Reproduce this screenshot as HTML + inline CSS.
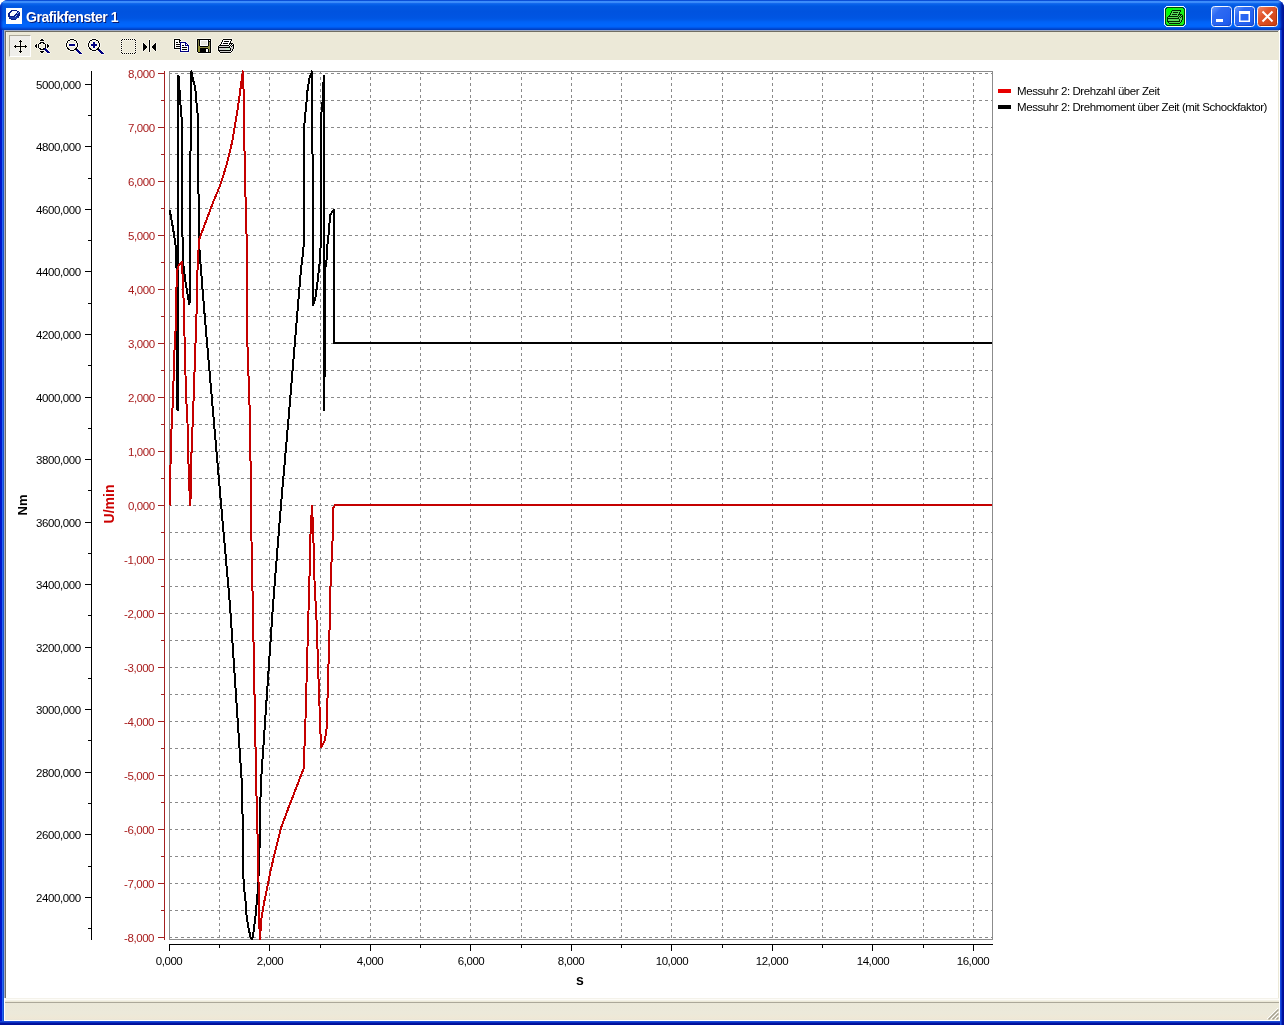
<!DOCTYPE html><html><head><meta charset="utf-8"><title>Grafikfenster 1</title><style>
html,body{margin:0;padding:0;background:#fff;width:1284px;height:1025px;overflow:hidden;}
.a{position:absolute;}
.t{position:absolute;font-family:'Liberation Sans', sans-serif;font-size:11.5px;line-height:12px;white-space:nowrap;letter-spacing:-0.42px;will-change:transform;}
</style></head><body>
<div class="a" style="left:0;top:0;width:1284px;height:1025px;border-radius:8px 8px 0 0;background:#0a3fd8;overflow:hidden">
<div class="a" style="left:0;top:0;width:1284px;height:30px;background:linear-gradient(to bottom,#0a4fd8 0px,#0a4fd8 1px,#3d8ffd 1px,#3a89f7 3px,#1a6ef0 3px,#0a62ea 4px,#0360e8 5px,#0057e2 6px,#0053df 12px,#0055e2 18px,#005ae9 20px,#0062f6 22px,#0066fc 25px,#0062f8 27px,#0050e0 28px,#0046cc 29px,#003bb6 30px)"></div>
<div class="a" style="left:0;top:30px;width:4px;height:991px;background:linear-gradient(to right,#0016c8 0,#0018d0 2px,#2464f2 2px,#2464f2 3px,#1650d0 3px,#1650d0 4px)"></div>
<div class="a" style="left:1280px;top:30px;width:4px;height:995px;background:linear-gradient(to right,#1a4ee0 0,#1a4ee0 1px,#0a32c8 1px,#0a32c8 2px,#0012a4 2px,#000e94 4px)"></div>
<div class="a" style="left:0;top:1021px;width:1280px;height:4px;background:linear-gradient(to bottom,#1a48d4 0,#1a48d4 1px,#0a30c0 1px,#0a30c0 2px,#0012a4 2px,#000e94 4px)"></div>
<div class="a" style="left:0;top:0;width:3px;height:30px;background:linear-gradient(to right,rgba(0,20,170,0.75),rgba(0,40,200,0.0))"></div>
<div class="a" style="left:1278px;top:0;width:6px;height:30px;background:linear-gradient(to right,rgba(0,30,180,0) 0,rgba(0,30,180,0.35) 2px,rgba(0,16,150,0.85) 4px,rgba(0,12,140,0.95) 6px)"></div>
</div>
<div class="a" style="left:4px;top:30px;width:1276px;height:991px;background:#ece9d8"></div>
<div class="a" style="left:4px;top:30px;width:1275px;height:1px;background:#a0acc8"></div>
<div class="a" style="left:4px;top:30px;width:1px;height:968px;background:#a0acc8"></div>
<div class="a" style="left:5px;top:31px;width:1273px;height:1px;background:#716f64"></div>
<div class="a" style="left:5px;top:31px;width:1px;height:967px;background:#716f64"></div>
<div class="a" style="left:1279px;top:30px;width:1px;height:991px;background:#fff"></div>
<div class="a" style="left:4px;top:1020px;width:1276px;height:1px;background:#fff"></div>
<div class="a" style="left:4px;top:998px;width:1px;height:23px;background:#fff"></div>
<div class="a" style="left:6px;top:32px;width:1272px;height:28px;background:#ece9d8"></div>
<div class="a" style="left:6px;top:32px;width:1px;height:28px;background:#f5f3ea"></div>
<div class="a" style="left:6px;top:60px;width:1272px;height:938px;background:#fff"></div>
<div class="a" style="left:5px;top:998px;width:1274px;height:1px;background:#f4f2ea"></div>
<div class="a" style="left:5px;top:999px;width:1274px;height:1px;background:#fdfcf8"></div>
<div class="a" style="left:5px;top:1000px;width:1274px;height:1px;background:#f3f1e6"></div>
<div class="a" style="left:5px;top:1002px;width:1274px;height:1px;background:#aca899"></div>
<div class="a" style="left:5px;top:1003px;width:1274px;height:17px;background:linear-gradient(to bottom,#ebe8d8,#ece9da 60%,#efe8d6 90%,#e9e6d8)"></div>
<svg class="a" style="left:1266px;top:1007px" width="13" height="13" viewBox="0 0 13 13"><path d="M12 1 L1 12 M12 5 L5 12 M12 9 L9 12" stroke="#fff" stroke-width="1"/><path d="M12.5 2.5 L2.5 12.5 M12.5 6.5 L6.5 12.5 M12.5 10.5 L10.5 12.5" stroke="#a5a191" stroke-width="1.4"/></svg>
<svg class="a" style="left:0;top:0" width="30" height="30" viewBox="0 0 30 30" shape-rendering="crispEdges"><rect x="6" y="8" width="16" height="1" fill="#fbfdff"/><rect x="6" y="9" width="16" height="1" fill="#fbfdff"/><rect x="6" y="10" width="16" height="1" fill="#fbfdff"/><rect x="6" y="11" width="16" height="1" fill="#fbfdff"/><rect x="6" y="12" width="16" height="1" fill="#fbfdff"/><rect x="6" y="13" width="16" height="1" fill="#fbfdff"/><rect x="6" y="14" width="16" height="1" fill="#fbfdff"/><rect x="6" y="15" width="16" height="1" fill="#fbfdff"/><rect x="6" y="16" width="16" height="1" fill="#fbfdff"/><rect x="6" y="17" width="16" height="1" fill="#fbfdff"/><rect x="6" y="18" width="16" height="1" fill="#fbfdff"/><rect x="6" y="19" width="16" height="1" fill="#fbfdff"/><rect x="6" y="20" width="16" height="1" fill="#fbfdff"/><rect x="6" y="21" width="16" height="1" fill="#fbfdff"/><rect x="6" y="22" width="16" height="1" fill="#fbfdff"/><rect x="6" y="23" width="16" height="1" fill="#fbfdff"/><rect x="11" y="10" width="6" height="1" fill="#0a1e8a"/><rect x="10" y="11" width="2" height="1" fill="#0a1e8a"/><rect x="17" y="11" width="2" height="1" fill="#0a1e8a"/><rect x="9" y="12" width="2" height="1" fill="#0a1e8a"/><rect x="17" y="12" width="1" height="1" fill="#0a1e8a"/><rect x="18" y="12" width="1" height="1" fill="#90b8ff"/><rect x="19" y="12" width="1" height="1" fill="#0a1e8a"/><rect x="8" y="13" width="2" height="1" fill="#0a1e8a"/><rect x="16" y="13" width="1" height="1" fill="#0a1e8a"/><rect x="17" y="13" width="1" height="1" fill="#90b8ff"/><rect x="18" y="13" width="2" height="1" fill="#0a1e8a"/><rect x="8" y="14" width="2" height="1" fill="#0a1e8a"/><rect x="15" y="14" width="5" height="1" fill="#0a1e8a"/><rect x="8" y="15" width="2" height="1" fill="#0a1e8a"/><rect x="14" y="15" width="2" height="1" fill="#0a1e8a"/><rect x="16" y="15" width="1" height="1" fill="#90b8ff"/><rect x="17" y="15" width="3" height="1" fill="#0a1e8a"/><rect x="8" y="16" width="7" height="1" fill="#0a1e8a"/><rect x="15" y="16" width="1" height="1" fill="#90b8ff"/><rect x="16" y="16" width="3" height="1" fill="#0a1e8a"/><rect x="9" y="17" width="10" height="1" fill="#1a3aaa"/><rect x="9" y="18" width="2" height="1" fill="#0a1e8a"/><rect x="11" y="18" width="6" height="1" fill="#1a3aaa"/><rect x="11" y="19" width="5" height="1" fill="#0a1e8a"/></svg>
<div class="a" style="left:26.5px;top:10px;font-family:'Liberation Sans', sans-serif;font-weight:bold;font-size:14px;line-height:16px;letter-spacing:-0.45px;white-space:nowrap;will-change:transform;color:#0a1a70">Grafikfenster 1</div>
<div class="a" style="left:25.5px;top:9px;font-family:'Liberation Sans', sans-serif;font-weight:bold;font-size:14px;line-height:16px;letter-spacing:-0.45px;white-space:nowrap;will-change:transform;color:#fff">Grafikfenster 1</div>
<svg class="a" style="left:1160px;top:0" width="30" height="30" viewBox="1160 0 30 30" shape-rendering="crispEdges"><rect x="1166" y="6" width="18" height="1" fill="#f0fff4"/><rect x="1165" y="7" width="1" height="1" fill="#f0fff4"/><rect x="1167" y="7" width="16" height="1" fill="#004a00"/><rect x="1184" y="7" width="1" height="1" fill="#f0fff4"/><rect x="1164" y="8" width="1" height="1" fill="#f0fff4"/><rect x="1166" y="8" width="1" height="1" fill="#004a00"/><rect x="1167" y="8" width="6" height="1" fill="#00ff00"/><rect x="1173" y="8" width="10" height="1" fill="#18f018"/><rect x="1183" y="8" width="1" height="1" fill="#004a00"/><rect x="1185" y="8" width="1" height="1" fill="#f0fff4"/><rect x="1164" y="9" width="1" height="1" fill="#f0fff4"/><rect x="1165" y="9" width="1" height="1" fill="#004a00"/><rect x="1166" y="9" width="1" height="1" fill="#18f018"/><rect x="1167" y="9" width="6" height="1" fill="#00ff00"/><rect x="1173" y="9" width="11" height="1" fill="#18f018"/><rect x="1184" y="9" width="1" height="1" fill="#004a00"/><rect x="1185" y="9" width="1" height="1" fill="#f0fff4"/><rect x="1164" y="10" width="1" height="1" fill="#f0fff4"/><rect x="1165" y="10" width="1" height="1" fill="#004a00"/><rect x="1166" y="10" width="1" height="1" fill="#18f018"/><rect x="1167" y="10" width="5" height="1" fill="#00ff00"/><rect x="1172" y="10" width="9" height="1" fill="#002800"/><rect x="1181" y="10" width="3" height="1" fill="#18f018"/><rect x="1184" y="10" width="1" height="1" fill="#004a00"/><rect x="1185" y="10" width="1" height="1" fill="#f0fff4"/><rect x="1164" y="11" width="1" height="1" fill="#f0fff4"/><rect x="1165" y="11" width="1" height="1" fill="#004a00"/><rect x="1166" y="11" width="1" height="1" fill="#18f018"/><rect x="1167" y="11" width="4" height="1" fill="#00ff00"/><rect x="1171" y="11" width="1" height="1" fill="#002800"/><rect x="1172" y="11" width="8" height="1" fill="#58d858"/><rect x="1180" y="11" width="1" height="1" fill="#002800"/><rect x="1181" y="11" width="3" height="1" fill="#18f018"/><rect x="1184" y="11" width="1" height="1" fill="#004a00"/><rect x="1185" y="11" width="1" height="1" fill="#f0fff4"/><rect x="1164" y="12" width="1" height="1" fill="#f0fff4"/><rect x="1165" y="12" width="1" height="1" fill="#004a00"/><rect x="1166" y="12" width="1" height="1" fill="#18f018"/><rect x="1167" y="12" width="4" height="1" fill="#00ff00"/><rect x="1171" y="12" width="1" height="1" fill="#002800"/><rect x="1172" y="12" width="1" height="1" fill="#58d858"/><rect x="1173" y="12" width="5" height="1" fill="#002800"/><rect x="1178" y="12" width="1" height="1" fill="#58d858"/><rect x="1179" y="12" width="1" height="1" fill="#002800"/><rect x="1180" y="12" width="4" height="1" fill="#18f018"/><rect x="1184" y="12" width="1" height="1" fill="#004a00"/><rect x="1185" y="12" width="1" height="1" fill="#f0fff4"/><rect x="1164" y="13" width="1" height="1" fill="#f0fff4"/><rect x="1165" y="13" width="1" height="1" fill="#004a00"/><rect x="1166" y="13" width="1" height="1" fill="#18f018"/><rect x="1167" y="13" width="3" height="1" fill="#00ff00"/><rect x="1170" y="13" width="1" height="1" fill="#002800"/><rect x="1171" y="13" width="8" height="1" fill="#58d858"/><rect x="1179" y="13" width="1" height="1" fill="#002800"/><rect x="1180" y="13" width="4" height="1" fill="#18f018"/><rect x="1184" y="13" width="1" height="1" fill="#004a00"/><rect x="1185" y="13" width="1" height="1" fill="#f0fff4"/><rect x="1164" y="14" width="1" height="1" fill="#f0fff4"/><rect x="1165" y="14" width="1" height="1" fill="#004a00"/><rect x="1166" y="14" width="1" height="1" fill="#18f018"/><rect x="1167" y="14" width="3" height="1" fill="#00ff00"/><rect x="1170" y="14" width="1" height="1" fill="#002800"/><rect x="1171" y="14" width="1" height="1" fill="#58d858"/><rect x="1172" y="14" width="5" height="1" fill="#002800"/><rect x="1177" y="14" width="1" height="1" fill="#58d858"/><rect x="1178" y="14" width="4" height="1" fill="#002800"/><rect x="1182" y="14" width="2" height="1" fill="#18f018"/><rect x="1184" y="14" width="1" height="1" fill="#004a00"/><rect x="1185" y="14" width="1" height="1" fill="#f0fff4"/><rect x="1164" y="15" width="1" height="1" fill="#f0fff4"/><rect x="1165" y="15" width="1" height="1" fill="#004a00"/><rect x="1166" y="15" width="3" height="1" fill="#18f018"/><rect x="1169" y="15" width="1" height="1" fill="#002800"/><rect x="1170" y="15" width="8" height="1" fill="#58d858"/><rect x="1178" y="15" width="1" height="1" fill="#002800"/><rect x="1179" y="15" width="1" height="1" fill="#58d858"/><rect x="1180" y="15" width="1" height="1" fill="#002800"/><rect x="1181" y="15" width="1" height="1" fill="#58d858"/><rect x="1182" y="15" width="1" height="1" fill="#002800"/><rect x="1183" y="15" width="1" height="1" fill="#18f018"/><rect x="1184" y="15" width="1" height="1" fill="#004a00"/><rect x="1185" y="15" width="1" height="1" fill="#f0fff4"/><rect x="1164" y="16" width="1" height="1" fill="#f0fff4"/><rect x="1165" y="16" width="1" height="1" fill="#004a00"/><rect x="1166" y="16" width="2" height="1" fill="#18f018"/><rect x="1168" y="16" width="10" height="1" fill="#002800"/><rect x="1178" y="16" width="1" height="1" fill="#58d858"/><rect x="1179" y="16" width="1" height="1" fill="#002800"/><rect x="1180" y="16" width="1" height="1" fill="#58d858"/><rect x="1181" y="16" width="2" height="1" fill="#002800"/><rect x="1183" y="16" width="1" height="1" fill="#18f018"/><rect x="1184" y="16" width="1" height="1" fill="#004a00"/><rect x="1185" y="16" width="1" height="1" fill="#f0fff4"/><rect x="1164" y="17" width="1" height="1" fill="#f0fff4"/><rect x="1165" y="17" width="1" height="1" fill="#004a00"/><rect x="1166" y="17" width="1" height="1" fill="#18f018"/><rect x="1167" y="17" width="1" height="1" fill="#002800"/><rect x="1168" y="17" width="10" height="1" fill="#58d858"/><rect x="1178" y="17" width="1" height="1" fill="#002800"/><rect x="1179" y="17" width="1" height="1" fill="#58d858"/><rect x="1180" y="17" width="1" height="1" fill="#002800"/><rect x="1181" y="17" width="1" height="1" fill="#58d858"/><rect x="1182" y="17" width="1" height="1" fill="#002800"/><rect x="1183" y="17" width="1" height="1" fill="#18f018"/><rect x="1184" y="17" width="1" height="1" fill="#004a00"/><rect x="1185" y="17" width="1" height="1" fill="#f0fff4"/><rect x="1164" y="18" width="1" height="1" fill="#f0fff4"/><rect x="1165" y="18" width="1" height="1" fill="#004a00"/><rect x="1166" y="18" width="1" height="1" fill="#18f018"/><rect x="1167" y="18" width="12" height="1" fill="#002800"/><rect x="1179" y="18" width="3" height="1" fill="#58d858"/><rect x="1182" y="18" width="1" height="1" fill="#002800"/><rect x="1183" y="18" width="1" height="1" fill="#18f018"/><rect x="1184" y="18" width="1" height="1" fill="#004a00"/><rect x="1185" y="18" width="1" height="1" fill="#f0fff4"/><rect x="1164" y="19" width="1" height="1" fill="#f0fff4"/><rect x="1165" y="19" width="1" height="1" fill="#004a00"/><rect x="1166" y="19" width="1" height="1" fill="#18f018"/><rect x="1167" y="19" width="1" height="1" fill="#002800"/><rect x="1168" y="19" width="11" height="1" fill="#58d858"/><rect x="1179" y="19" width="1" height="1" fill="#002800"/><rect x="1180" y="19" width="2" height="1" fill="#58d858"/><rect x="1182" y="19" width="1" height="1" fill="#002800"/><rect x="1183" y="19" width="1" height="1" fill="#18f018"/><rect x="1184" y="19" width="1" height="1" fill="#004a00"/><rect x="1185" y="19" width="1" height="1" fill="#f0fff4"/><rect x="1164" y="20" width="1" height="1" fill="#f0fff4"/><rect x="1165" y="20" width="1" height="1" fill="#004a00"/><rect x="1166" y="20" width="1" height="1" fill="#18f018"/><rect x="1167" y="20" width="1" height="1" fill="#002800"/><rect x="1168" y="20" width="11" height="1" fill="#58d858"/><rect x="1179" y="20" width="1" height="1" fill="#002800"/><rect x="1180" y="20" width="1" height="1" fill="#58d858"/><rect x="1181" y="20" width="1" height="1" fill="#002800"/><rect x="1182" y="20" width="2" height="1" fill="#18f018"/><rect x="1184" y="20" width="1" height="1" fill="#004a00"/><rect x="1185" y="20" width="1" height="1" fill="#f0fff4"/><rect x="1164" y="21" width="1" height="1" fill="#f0fff4"/><rect x="1165" y="21" width="1" height="1" fill="#004a00"/><rect x="1166" y="21" width="1" height="1" fill="#18f018"/><rect x="1167" y="21" width="13" height="1" fill="#002800"/><rect x="1180" y="21" width="1" height="1" fill="#58d858"/><rect x="1181" y="21" width="1" height="1" fill="#002800"/><rect x="1182" y="21" width="2" height="1" fill="#18f018"/><rect x="1184" y="21" width="1" height="1" fill="#004a00"/><rect x="1185" y="21" width="1" height="1" fill="#f0fff4"/><rect x="1164" y="22" width="1" height="1" fill="#f0fff4"/><rect x="1165" y="22" width="1" height="1" fill="#004a00"/><rect x="1166" y="22" width="2" height="1" fill="#18f018"/><rect x="1168" y="22" width="1" height="1" fill="#002800"/><rect x="1169" y="22" width="11" height="1" fill="#58d858"/><rect x="1180" y="22" width="1" height="1" fill="#002800"/><rect x="1181" y="22" width="3" height="1" fill="#18f018"/><rect x="1184" y="22" width="1" height="1" fill="#004a00"/><rect x="1185" y="22" width="1" height="1" fill="#f0fff4"/><rect x="1164" y="23" width="1" height="1" fill="#f0fff4"/><rect x="1165" y="23" width="1" height="1" fill="#004a00"/><rect x="1166" y="23" width="3" height="1" fill="#18f018"/><rect x="1169" y="23" width="11" height="1" fill="#002800"/><rect x="1180" y="23" width="4" height="1" fill="#18f018"/><rect x="1184" y="23" width="1" height="1" fill="#004a00"/><rect x="1185" y="23" width="1" height="1" fill="#f0fff4"/><rect x="1164" y="24" width="1" height="1" fill="#f0fff4"/><rect x="1166" y="24" width="1" height="1" fill="#004a00"/><rect x="1167" y="24" width="16" height="1" fill="#18f018"/><rect x="1183" y="24" width="1" height="1" fill="#004a00"/><rect x="1185" y="24" width="1" height="1" fill="#f0fff4"/><rect x="1165" y="25" width="1" height="1" fill="#f0fff4"/><rect x="1167" y="25" width="16" height="1" fill="#004a00"/><rect x="1184" y="25" width="1" height="1" fill="#f0fff4"/><rect x="1166" y="26" width="18" height="1" fill="#f0fff4"/></svg>
<svg class="a" style="left:1211px;top:6px" width="21" height="21" viewBox="0 0 21 21"><defs><linearGradient id="gmin" x1="0" y1="0" x2="1" y2="1"><stop offset="0" stop-color="#6a9cff"/><stop offset="0.3" stop-color="#2e6af2"/><stop offset="0.75" stop-color="#2260f0"/><stop offset="1" stop-color="#1a4ed8"/></linearGradient></defs><rect x="0.5" y="0.5" width="20" height="20" rx="3" fill="url(#gmin)" stroke="#f4f8ff" stroke-width="1"/><path d="M19.5 2.5V17.5Q19.5 19.5 17.5 19.5H2.5" fill="none" stroke="#1040c0" stroke-width="1" opacity="0.6"/><rect x="5" y="13" width="7" height="3" fill="#fff"/></svg>
<svg class="a" style="left:1234px;top:6px" width="21" height="21" viewBox="0 0 21 21"><defs><linearGradient id="gmax" x1="0" y1="0" x2="1" y2="1"><stop offset="0" stop-color="#6a9cff"/><stop offset="0.3" stop-color="#2e6af2"/><stop offset="0.75" stop-color="#2260f0"/><stop offset="1" stop-color="#1a4ed8"/></linearGradient></defs><rect x="0.5" y="0.5" width="20" height="20" rx="3" fill="url(#gmax)" stroke="#f4f8ff" stroke-width="1"/><path d="M19.5 2.5V17.5Q19.5 19.5 17.5 19.5H2.5" fill="none" stroke="#1040c0" stroke-width="1" opacity="0.6"/><path d="M5 5h11v11H5z M6.5 8v6.5h8V8z" fill="#fff" fill-rule="evenodd"/></svg>
<svg class="a" style="left:1257px;top:6px" width="21" height="21" viewBox="0 0 21 21"><defs><linearGradient id="gc" x1="0" y1="0" x2="1" y2="1"><stop offset="0" stop-color="#f08a6a"/><stop offset="0.35" stop-color="#e2572e"/><stop offset="1" stop-color="#c83c0a"/></linearGradient></defs><rect x="0.5" y="0.5" width="20" height="20" rx="3" fill="url(#gc)" stroke="#f4f8ff" stroke-width="1"/><path d="M19.5 2.5V17.5Q19.5 19.5 17.5 19.5H2.5" fill="none" stroke="#a8300c" stroke-width="1" opacity="0.8"/><path d="M5.5 5.5L15.5 15.5M15.5 5.5L5.5 15.5" stroke="#fff" stroke-width="2"/></svg>
<div class="a" style="left:9px;top:35px;width:22px;height:22px;box-sizing:border-box;border-top:1px solid #aca899;border-left:1px solid #aca899;border-right:1px solid #fff;border-bottom:1px solid #fff;background:#efeeea"></div>
<svg class="a" style="left:0;top:30px" width="260" height="30" viewBox="0 30 260 30" shape-rendering="crispEdges"><rect x="20" y="39" width="1" height="1" fill="#faf8ee"/><rect x="19" y="40" width="1" height="1" fill="#faf8ee"/><rect x="21" y="40" width="1" height="1" fill="#faf8ee"/><rect x="18" y="41" width="1" height="1" fill="#faf8ee"/><rect x="22" y="41" width="1" height="1" fill="#faf8ee"/><rect x="19" y="42" width="1" height="1" fill="#faf8ee"/><rect x="21" y="42" width="1" height="1" fill="#faf8ee"/><rect x="19" y="43" width="1" height="1" fill="#faf8ee"/><rect x="21" y="43" width="1" height="1" fill="#faf8ee"/><rect x="15" y="44" width="1" height="1" fill="#faf8ee"/><rect x="19" y="44" width="1" height="1" fill="#faf8ee"/><rect x="21" y="44" width="1" height="1" fill="#faf8ee"/><rect x="25" y="44" width="1" height="1" fill="#faf8ee"/><rect x="14" y="45" width="1" height="1" fill="#faf8ee"/><rect x="16" y="45" width="4" height="1" fill="#faf8ee"/><rect x="21" y="45" width="4" height="1" fill="#faf8ee"/><rect x="26" y="45" width="1" height="1" fill="#faf8ee"/><rect x="13" y="46" width="1" height="1" fill="#faf8ee"/><rect x="27" y="46" width="1" height="1" fill="#faf8ee"/><rect x="14" y="47" width="1" height="1" fill="#faf8ee"/><rect x="16" y="47" width="4" height="1" fill="#faf8ee"/><rect x="21" y="47" width="4" height="1" fill="#faf8ee"/><rect x="26" y="47" width="1" height="1" fill="#faf8ee"/><rect x="15" y="48" width="1" height="1" fill="#faf8ee"/><rect x="19" y="48" width="1" height="1" fill="#faf8ee"/><rect x="21" y="48" width="1" height="1" fill="#faf8ee"/><rect x="25" y="48" width="1" height="1" fill="#faf8ee"/><rect x="19" y="49" width="1" height="1" fill="#faf8ee"/><rect x="21" y="49" width="1" height="1" fill="#faf8ee"/><rect x="19" y="50" width="1" height="1" fill="#faf8ee"/><rect x="21" y="50" width="1" height="1" fill="#faf8ee"/><rect x="18" y="51" width="1" height="1" fill="#faf8ee"/><rect x="22" y="51" width="1" height="1" fill="#faf8ee"/><rect x="19" y="52" width="1" height="1" fill="#faf8ee"/><rect x="21" y="52" width="1" height="1" fill="#faf8ee"/><rect x="20" y="53" width="1" height="1" fill="#faf8ee"/><rect x="20" y="40" width="1" height="1" fill="#000000"/><rect x="19" y="41" width="3" height="1" fill="#000000"/><rect x="20" y="42" width="1" height="1" fill="#000000"/><rect x="20" y="43" width="1" height="1" fill="#000000"/><rect x="20" y="44" width="1" height="1" fill="#000000"/><rect x="15" y="45" width="1" height="1" fill="#000000"/><rect x="20" y="45" width="1" height="1" fill="#000000"/><rect x="25" y="45" width="1" height="1" fill="#000000"/><rect x="14" y="46" width="13" height="1" fill="#000000"/><rect x="15" y="47" width="1" height="1" fill="#000000"/><rect x="20" y="47" width="1" height="1" fill="#000000"/><rect x="25" y="47" width="1" height="1" fill="#000000"/><rect x="20" y="48" width="1" height="1" fill="#000000"/><rect x="20" y="49" width="1" height="1" fill="#000000"/><rect x="20" y="50" width="1" height="1" fill="#000000"/><rect x="19" y="51" width="3" height="1" fill="#000000"/><rect x="20" y="52" width="1" height="1" fill="#000000"/><rect x="41" y="38" width="2" height="1" fill="#faf8ee"/><rect x="40" y="39" width="1" height="1" fill="#faf8ee"/><rect x="43" y="39" width="1" height="1" fill="#faf8ee"/><rect x="39" y="40" width="1" height="1" fill="#faf8ee"/><rect x="44" y="40" width="1" height="1" fill="#faf8ee"/><rect x="40" y="41" width="4" height="1" fill="#faf8ee"/><rect x="39" y="42" width="1" height="1" fill="#faf8ee"/><rect x="44" y="42" width="1" height="1" fill="#faf8ee"/><rect x="36" y="43" width="1" height="1" fill="#faf8ee"/><rect x="38" y="43" width="1" height="1" fill="#faf8ee"/><rect x="41" y="43" width="2" height="1" fill="#faf8ee"/><rect x="45" y="43" width="1" height="1" fill="#faf8ee"/><rect x="47" y="43" width="1" height="1" fill="#faf8ee"/><rect x="35" y="44" width="1" height="1" fill="#faf8ee"/><rect x="37" y="44" width="1" height="1" fill="#faf8ee"/><rect x="39" y="44" width="2" height="1" fill="#faf8ee"/><rect x="43" y="44" width="2" height="1" fill="#faf8ee"/><rect x="46" y="44" width="1" height="1" fill="#faf8ee"/><rect x="48" y="44" width="1" height="1" fill="#faf8ee"/><rect x="34" y="45" width="1" height="1" fill="#faf8ee"/><rect x="37" y="45" width="1" height="1" fill="#faf8ee"/><rect x="39" y="45" width="1" height="1" fill="#faf8ee"/><rect x="44" y="45" width="1" height="1" fill="#faf8ee"/><rect x="46" y="45" width="1" height="1" fill="#faf8ee"/><rect x="49" y="45" width="1" height="1" fill="#faf8ee"/><rect x="34" y="46" width="1" height="1" fill="#faf8ee"/><rect x="37" y="46" width="1" height="1" fill="#faf8ee"/><rect x="39" y="46" width="1" height="1" fill="#faf8ee"/><rect x="44" y="46" width="1" height="1" fill="#faf8ee"/><rect x="46" y="46" width="1" height="1" fill="#faf8ee"/><rect x="49" y="46" width="1" height="1" fill="#faf8ee"/><rect x="35" y="47" width="1" height="1" fill="#faf8ee"/><rect x="37" y="47" width="1" height="1" fill="#faf8ee"/><rect x="39" y="47" width="2" height="1" fill="#faf8ee"/><rect x="43" y="47" width="2" height="1" fill="#faf8ee"/><rect x="46" y="47" width="1" height="1" fill="#faf8ee"/><rect x="48" y="47" width="1" height="1" fill="#faf8ee"/><rect x="36" y="48" width="1" height="1" fill="#faf8ee"/><rect x="38" y="48" width="1" height="1" fill="#faf8ee"/><rect x="41" y="48" width="2" height="1" fill="#faf8ee"/><rect x="46" y="48" width="2" height="1" fill="#faf8ee"/><rect x="39" y="49" width="1" height="1" fill="#faf8ee"/><rect x="47" y="49" width="1" height="1" fill="#faf8ee"/><rect x="40" y="50" width="5" height="1" fill="#faf8ee"/><rect x="48" y="50" width="1" height="1" fill="#faf8ee"/><rect x="39" y="51" width="1" height="1" fill="#faf8ee"/><rect x="44" y="51" width="2" height="1" fill="#faf8ee"/><rect x="49" y="51" width="1" height="1" fill="#faf8ee"/><rect x="40" y="52" width="1" height="1" fill="#faf8ee"/><rect x="43" y="52" width="1" height="1" fill="#faf8ee"/><rect x="46" y="52" width="1" height="1" fill="#faf8ee"/><rect x="50" y="52" width="1" height="1" fill="#faf8ee"/><rect x="41" y="53" width="2" height="1" fill="#faf8ee"/><rect x="47" y="53" width="3" height="1" fill="#faf8ee"/><rect x="41" y="39" width="2" height="1" fill="#000000"/><rect x="40" y="40" width="4" height="1" fill="#000000"/><rect x="40" y="42" width="4" height="1" fill="#000000"/><rect x="39" y="43" width="2" height="1" fill="#000000"/><rect x="43" y="43" width="2" height="1" fill="#000000"/><rect x="36" y="44" width="1" height="1" fill="#000000"/><rect x="38" y="44" width="1" height="1" fill="#000000"/><rect x="45" y="44" width="1" height="1" fill="#000000"/><rect x="47" y="44" width="1" height="1" fill="#000000"/><rect x="35" y="45" width="2" height="1" fill="#000000"/><rect x="38" y="45" width="1" height="1" fill="#000000"/><rect x="45" y="45" width="1" height="1" fill="#000000"/><rect x="47" y="45" width="2" height="1" fill="#000000"/><rect x="35" y="46" width="2" height="1" fill="#000000"/><rect x="38" y="46" width="1" height="1" fill="#000000"/><rect x="45" y="46" width="1" height="1" fill="#000000"/><rect x="47" y="46" width="2" height="1" fill="#000000"/><rect x="36" y="47" width="1" height="1" fill="#000000"/><rect x="38" y="47" width="1" height="1" fill="#000000"/><rect x="45" y="47" width="1" height="1" fill="#000000"/><rect x="47" y="47" width="1" height="1" fill="#000000"/><rect x="39" y="48" width="2" height="1" fill="#000000"/><rect x="43" y="48" width="2" height="1" fill="#000000"/><rect x="45" y="48" width="1" height="1" fill="#000080"/><rect x="40" y="49" width="4" height="1" fill="#000000"/><rect x="44" y="49" width="3" height="1" fill="#000080"/><rect x="45" y="50" width="3" height="1" fill="#000080"/><rect x="40" y="51" width="4" height="1" fill="#000000"/><rect x="46" y="51" width="3" height="1" fill="#000080"/><rect x="41" y="52" width="2" height="1" fill="#000000"/><rect x="47" y="52" width="3" height="1" fill="#000080"/><rect x="70" y="38" width="4" height="1" fill="#faf8ee"/><rect x="68" y="39" width="2" height="1" fill="#faf8ee"/><rect x="74" y="39" width="2" height="1" fill="#faf8ee"/><rect x="67" y="40" width="1" height="1" fill="#faf8ee"/><rect x="70" y="40" width="4" height="1" fill="#faf8ee"/><rect x="76" y="40" width="1" height="1" fill="#faf8ee"/><rect x="66" y="41" width="1" height="1" fill="#faf8ee"/><rect x="68" y="41" width="2" height="1" fill="#faf8ee"/><rect x="74" y="41" width="2" height="1" fill="#faf8ee"/><rect x="77" y="41" width="1" height="1" fill="#faf8ee"/><rect x="66" y="42" width="1" height="1" fill="#faf8ee"/><rect x="68" y="42" width="1" height="1" fill="#faf8ee"/><rect x="75" y="42" width="1" height="1" fill="#faf8ee"/><rect x="77" y="42" width="1" height="1" fill="#faf8ee"/><rect x="65" y="43" width="1" height="1" fill="#faf8ee"/><rect x="67" y="43" width="1" height="1" fill="#faf8ee"/><rect x="69" y="43" width="6" height="1" fill="#faf8ee"/><rect x="76" y="43" width="1" height="1" fill="#faf8ee"/><rect x="78" y="43" width="1" height="1" fill="#faf8ee"/><rect x="65" y="44" width="1" height="1" fill="#faf8ee"/><rect x="67" y="44" width="2" height="1" fill="#faf8ee"/><rect x="75" y="44" width="2" height="1" fill="#faf8ee"/><rect x="78" y="44" width="1" height="1" fill="#faf8ee"/><rect x="65" y="45" width="1" height="1" fill="#faf8ee"/><rect x="67" y="45" width="2" height="1" fill="#faf8ee"/><rect x="75" y="45" width="2" height="1" fill="#faf8ee"/><rect x="78" y="45" width="1" height="1" fill="#faf8ee"/><rect x="65" y="46" width="1" height="1" fill="#faf8ee"/><rect x="67" y="46" width="1" height="1" fill="#faf8ee"/><rect x="69" y="46" width="6" height="1" fill="#faf8ee"/><rect x="76" y="46" width="1" height="1" fill="#faf8ee"/><rect x="78" y="46" width="1" height="1" fill="#faf8ee"/><rect x="66" y="47" width="1" height="1" fill="#faf8ee"/><rect x="68" y="47" width="1" height="1" fill="#faf8ee"/><rect x="75" y="47" width="1" height="1" fill="#faf8ee"/><rect x="77" y="47" width="1" height="1" fill="#faf8ee"/><rect x="66" y="48" width="1" height="1" fill="#faf8ee"/><rect x="69" y="48" width="1" height="1" fill="#faf8ee"/><rect x="74" y="48" width="1" height="1" fill="#faf8ee"/><rect x="77" y="48" width="1" height="1" fill="#faf8ee"/><rect x="67" y="49" width="1" height="1" fill="#faf8ee"/><rect x="70" y="49" width="4" height="1" fill="#faf8ee"/><rect x="78" y="49" width="1" height="1" fill="#faf8ee"/><rect x="68" y="50" width="2" height="1" fill="#faf8ee"/><rect x="74" y="50" width="2" height="1" fill="#faf8ee"/><rect x="79" y="50" width="1" height="1" fill="#faf8ee"/><rect x="70" y="51" width="4" height="1" fill="#faf8ee"/><rect x="76" y="51" width="1" height="1" fill="#faf8ee"/><rect x="80" y="51" width="1" height="1" fill="#faf8ee"/><rect x="77" y="52" width="1" height="1" fill="#faf8ee"/><rect x="81" y="52" width="1" height="1" fill="#faf8ee"/><rect x="78" y="53" width="1" height="1" fill="#faf8ee"/><rect x="82" y="53" width="1" height="1" fill="#faf8ee"/><rect x="79" y="54" width="3" height="1" fill="#faf8ee"/><rect x="70" y="39" width="4" height="1" fill="#000000"/><rect x="68" y="40" width="2" height="1" fill="#000000"/><rect x="74" y="40" width="2" height="1" fill="#000000"/><rect x="67" y="41" width="1" height="1" fill="#000000"/><rect x="76" y="41" width="1" height="1" fill="#000000"/><rect x="67" y="42" width="1" height="1" fill="#000000"/><rect x="76" y="42" width="1" height="1" fill="#000000"/><rect x="66" y="43" width="1" height="1" fill="#000000"/><rect x="77" y="43" width="1" height="1" fill="#000000"/><rect x="66" y="44" width="1" height="1" fill="#000000"/><rect x="69" y="44" width="6" height="1" fill="#000080"/><rect x="77" y="44" width="1" height="1" fill="#000000"/><rect x="66" y="45" width="1" height="1" fill="#000000"/><rect x="69" y="45" width="6" height="1" fill="#000080"/><rect x="77" y="45" width="1" height="1" fill="#000000"/><rect x="66" y="46" width="1" height="1" fill="#000000"/><rect x="77" y="46" width="1" height="1" fill="#000000"/><rect x="67" y="47" width="1" height="1" fill="#000000"/><rect x="76" y="47" width="1" height="1" fill="#000000"/><rect x="67" y="48" width="2" height="1" fill="#000000"/><rect x="75" y="48" width="2" height="1" fill="#000000"/><rect x="68" y="49" width="2" height="1" fill="#000000"/><rect x="74" y="49" width="3" height="1" fill="#000000"/><rect x="77" y="49" width="1" height="1" fill="#000080"/><rect x="70" y="50" width="4" height="1" fill="#000000"/><rect x="76" y="50" width="3" height="1" fill="#000080"/><rect x="77" y="51" width="3" height="1" fill="#000080"/><rect x="78" y="52" width="3" height="1" fill="#000080"/><rect x="79" y="53" width="3" height="1" fill="#000080"/><rect x="92" y="38" width="4" height="1" fill="#faf8ee"/><rect x="90" y="39" width="2" height="1" fill="#faf8ee"/><rect x="96" y="39" width="2" height="1" fill="#faf8ee"/><rect x="89" y="40" width="1" height="1" fill="#faf8ee"/><rect x="92" y="40" width="4" height="1" fill="#faf8ee"/><rect x="98" y="40" width="1" height="1" fill="#faf8ee"/><rect x="88" y="41" width="1" height="1" fill="#faf8ee"/><rect x="90" y="41" width="2" height="1" fill="#faf8ee"/><rect x="93" y="41" width="2" height="1" fill="#faf8ee"/><rect x="96" y="41" width="2" height="1" fill="#faf8ee"/><rect x="99" y="41" width="1" height="1" fill="#faf8ee"/><rect x="88" y="42" width="1" height="1" fill="#faf8ee"/><rect x="90" y="42" width="1" height="1" fill="#faf8ee"/><rect x="92" y="42" width="1" height="1" fill="#faf8ee"/><rect x="95" y="42" width="1" height="1" fill="#faf8ee"/><rect x="97" y="42" width="1" height="1" fill="#faf8ee"/><rect x="99" y="42" width="1" height="1" fill="#faf8ee"/><rect x="87" y="43" width="1" height="1" fill="#faf8ee"/><rect x="89" y="43" width="1" height="1" fill="#faf8ee"/><rect x="91" y="43" width="2" height="1" fill="#faf8ee"/><rect x="95" y="43" width="2" height="1" fill="#faf8ee"/><rect x="98" y="43" width="1" height="1" fill="#faf8ee"/><rect x="100" y="43" width="1" height="1" fill="#faf8ee"/><rect x="87" y="44" width="1" height="1" fill="#faf8ee"/><rect x="89" y="44" width="2" height="1" fill="#faf8ee"/><rect x="97" y="44" width="2" height="1" fill="#faf8ee"/><rect x="100" y="44" width="1" height="1" fill="#faf8ee"/><rect x="87" y="45" width="1" height="1" fill="#faf8ee"/><rect x="89" y="45" width="2" height="1" fill="#faf8ee"/><rect x="97" y="45" width="2" height="1" fill="#faf8ee"/><rect x="100" y="45" width="1" height="1" fill="#faf8ee"/><rect x="87" y="46" width="1" height="1" fill="#faf8ee"/><rect x="89" y="46" width="1" height="1" fill="#faf8ee"/><rect x="91" y="46" width="2" height="1" fill="#faf8ee"/><rect x="95" y="46" width="2" height="1" fill="#faf8ee"/><rect x="98" y="46" width="1" height="1" fill="#faf8ee"/><rect x="100" y="46" width="1" height="1" fill="#faf8ee"/><rect x="88" y="47" width="1" height="1" fill="#faf8ee"/><rect x="90" y="47" width="1" height="1" fill="#faf8ee"/><rect x="92" y="47" width="1" height="1" fill="#faf8ee"/><rect x="95" y="47" width="1" height="1" fill="#faf8ee"/><rect x="97" y="47" width="1" height="1" fill="#faf8ee"/><rect x="99" y="47" width="1" height="1" fill="#faf8ee"/><rect x="88" y="48" width="1" height="1" fill="#faf8ee"/><rect x="91" y="48" width="1" height="1" fill="#faf8ee"/><rect x="93" y="48" width="2" height="1" fill="#faf8ee"/><rect x="96" y="48" width="1" height="1" fill="#faf8ee"/><rect x="99" y="48" width="1" height="1" fill="#faf8ee"/><rect x="89" y="49" width="1" height="1" fill="#faf8ee"/><rect x="92" y="49" width="4" height="1" fill="#faf8ee"/><rect x="100" y="49" width="1" height="1" fill="#faf8ee"/><rect x="90" y="50" width="2" height="1" fill="#faf8ee"/><rect x="96" y="50" width="2" height="1" fill="#faf8ee"/><rect x="101" y="50" width="1" height="1" fill="#faf8ee"/><rect x="92" y="51" width="4" height="1" fill="#faf8ee"/><rect x="98" y="51" width="1" height="1" fill="#faf8ee"/><rect x="102" y="51" width="1" height="1" fill="#faf8ee"/><rect x="99" y="52" width="1" height="1" fill="#faf8ee"/><rect x="103" y="52" width="1" height="1" fill="#faf8ee"/><rect x="100" y="53" width="1" height="1" fill="#faf8ee"/><rect x="104" y="53" width="1" height="1" fill="#faf8ee"/><rect x="101" y="54" width="3" height="1" fill="#faf8ee"/><rect x="92" y="39" width="4" height="1" fill="#000000"/><rect x="90" y="40" width="2" height="1" fill="#000000"/><rect x="96" y="40" width="2" height="1" fill="#000000"/><rect x="89" y="41" width="1" height="1" fill="#000000"/><rect x="98" y="41" width="1" height="1" fill="#000000"/><rect x="89" y="42" width="1" height="1" fill="#000000"/><rect x="93" y="42" width="2" height="1" fill="#000080"/><rect x="98" y="42" width="1" height="1" fill="#000000"/><rect x="88" y="43" width="1" height="1" fill="#000000"/><rect x="93" y="43" width="2" height="1" fill="#000080"/><rect x="99" y="43" width="1" height="1" fill="#000000"/><rect x="88" y="44" width="1" height="1" fill="#000000"/><rect x="91" y="44" width="6" height="1" fill="#000080"/><rect x="99" y="44" width="1" height="1" fill="#000000"/><rect x="88" y="45" width="1" height="1" fill="#000000"/><rect x="91" y="45" width="6" height="1" fill="#000080"/><rect x="99" y="45" width="1" height="1" fill="#000000"/><rect x="88" y="46" width="1" height="1" fill="#000000"/><rect x="93" y="46" width="2" height="1" fill="#000080"/><rect x="99" y="46" width="1" height="1" fill="#000000"/><rect x="89" y="47" width="1" height="1" fill="#000000"/><rect x="93" y="47" width="2" height="1" fill="#000080"/><rect x="98" y="47" width="1" height="1" fill="#000000"/><rect x="89" y="48" width="2" height="1" fill="#000000"/><rect x="97" y="48" width="2" height="1" fill="#000000"/><rect x="90" y="49" width="2" height="1" fill="#000000"/><rect x="96" y="49" width="3" height="1" fill="#000000"/><rect x="99" y="49" width="1" height="1" fill="#000080"/><rect x="92" y="50" width="4" height="1" fill="#000000"/><rect x="98" y="50" width="3" height="1" fill="#000080"/><rect x="99" y="51" width="3" height="1" fill="#000080"/><rect x="100" y="52" width="3" height="1" fill="#000080"/><rect x="101" y="53" width="3" height="1" fill="#000080"/><rect x="122" y="38" width="1" height="1" fill="#faf8ee"/><rect x="124" y="38" width="1" height="1" fill="#faf8ee"/><rect x="126" y="38" width="1" height="1" fill="#faf8ee"/><rect x="128" y="38" width="1" height="1" fill="#faf8ee"/><rect x="130" y="38" width="1" height="1" fill="#faf8ee"/><rect x="132" y="38" width="1" height="1" fill="#faf8ee"/><rect x="134" y="38" width="1" height="1" fill="#faf8ee"/><rect x="121" y="39" width="1" height="1" fill="#faf8ee"/><rect x="123" y="39" width="1" height="1" fill="#faf8ee"/><rect x="125" y="39" width="1" height="1" fill="#faf8ee"/><rect x="127" y="39" width="1" height="1" fill="#faf8ee"/><rect x="129" y="39" width="1" height="1" fill="#faf8ee"/><rect x="131" y="39" width="1" height="1" fill="#faf8ee"/><rect x="133" y="39" width="1" height="1" fill="#faf8ee"/><rect x="135" y="39" width="1" height="1" fill="#faf8ee"/><rect x="120" y="40" width="1" height="1" fill="#faf8ee"/><rect x="122" y="40" width="1" height="1" fill="#faf8ee"/><rect x="124" y="40" width="1" height="1" fill="#faf8ee"/><rect x="126" y="40" width="1" height="1" fill="#faf8ee"/><rect x="128" y="40" width="1" height="1" fill="#faf8ee"/><rect x="130" y="40" width="1" height="1" fill="#faf8ee"/><rect x="132" y="40" width="1" height="1" fill="#faf8ee"/><rect x="134" y="40" width="1" height="1" fill="#faf8ee"/><rect x="136" y="40" width="1" height="1" fill="#faf8ee"/><rect x="121" y="41" width="1" height="1" fill="#faf8ee"/><rect x="135" y="41" width="1" height="1" fill="#faf8ee"/><rect x="120" y="42" width="1" height="1" fill="#faf8ee"/><rect x="122" y="42" width="1" height="1" fill="#faf8ee"/><rect x="134" y="42" width="1" height="1" fill="#faf8ee"/><rect x="136" y="42" width="1" height="1" fill="#faf8ee"/><rect x="121" y="43" width="1" height="1" fill="#faf8ee"/><rect x="135" y="43" width="1" height="1" fill="#faf8ee"/><rect x="120" y="44" width="1" height="1" fill="#faf8ee"/><rect x="122" y="44" width="1" height="1" fill="#faf8ee"/><rect x="134" y="44" width="1" height="1" fill="#faf8ee"/><rect x="136" y="44" width="1" height="1" fill="#faf8ee"/><rect x="121" y="45" width="1" height="1" fill="#faf8ee"/><rect x="135" y="45" width="1" height="1" fill="#faf8ee"/><rect x="120" y="46" width="1" height="1" fill="#faf8ee"/><rect x="122" y="46" width="1" height="1" fill="#faf8ee"/><rect x="134" y="46" width="1" height="1" fill="#faf8ee"/><rect x="136" y="46" width="1" height="1" fill="#faf8ee"/><rect x="121" y="47" width="1" height="1" fill="#faf8ee"/><rect x="135" y="47" width="1" height="1" fill="#faf8ee"/><rect x="120" y="48" width="1" height="1" fill="#faf8ee"/><rect x="122" y="48" width="1" height="1" fill="#faf8ee"/><rect x="134" y="48" width="1" height="1" fill="#faf8ee"/><rect x="136" y="48" width="1" height="1" fill="#faf8ee"/><rect x="121" y="49" width="1" height="1" fill="#faf8ee"/><rect x="135" y="49" width="1" height="1" fill="#faf8ee"/><rect x="120" y="50" width="1" height="1" fill="#faf8ee"/><rect x="122" y="50" width="1" height="1" fill="#faf8ee"/><rect x="134" y="50" width="1" height="1" fill="#faf8ee"/><rect x="136" y="50" width="1" height="1" fill="#faf8ee"/><rect x="121" y="51" width="1" height="1" fill="#faf8ee"/><rect x="135" y="51" width="1" height="1" fill="#faf8ee"/><rect x="120" y="52" width="1" height="1" fill="#faf8ee"/><rect x="122" y="52" width="1" height="1" fill="#faf8ee"/><rect x="124" y="52" width="1" height="1" fill="#faf8ee"/><rect x="126" y="52" width="1" height="1" fill="#faf8ee"/><rect x="128" y="52" width="1" height="1" fill="#faf8ee"/><rect x="130" y="52" width="1" height="1" fill="#faf8ee"/><rect x="132" y="52" width="1" height="1" fill="#faf8ee"/><rect x="134" y="52" width="1" height="1" fill="#faf8ee"/><rect x="136" y="52" width="1" height="1" fill="#faf8ee"/><rect x="121" y="53" width="1" height="1" fill="#faf8ee"/><rect x="123" y="53" width="1" height="1" fill="#faf8ee"/><rect x="125" y="53" width="1" height="1" fill="#faf8ee"/><rect x="127" y="53" width="1" height="1" fill="#faf8ee"/><rect x="129" y="53" width="1" height="1" fill="#faf8ee"/><rect x="131" y="53" width="1" height="1" fill="#faf8ee"/><rect x="133" y="53" width="1" height="1" fill="#faf8ee"/><rect x="135" y="53" width="1" height="1" fill="#faf8ee"/><rect x="122" y="54" width="1" height="1" fill="#faf8ee"/><rect x="124" y="54" width="1" height="1" fill="#faf8ee"/><rect x="126" y="54" width="1" height="1" fill="#faf8ee"/><rect x="128" y="54" width="1" height="1" fill="#faf8ee"/><rect x="130" y="54" width="1" height="1" fill="#faf8ee"/><rect x="132" y="54" width="1" height="1" fill="#faf8ee"/><rect x="134" y="54" width="1" height="1" fill="#faf8ee"/><rect x="122" y="39" width="1" height="1" fill="#000000"/><rect x="124" y="39" width="1" height="1" fill="#000000"/><rect x="126" y="39" width="1" height="1" fill="#000000"/><rect x="128" y="39" width="1" height="1" fill="#000000"/><rect x="130" y="39" width="1" height="1" fill="#000000"/><rect x="132" y="39" width="1" height="1" fill="#000000"/><rect x="134" y="39" width="1" height="1" fill="#000000"/><rect x="121" y="40" width="1" height="1" fill="#000000"/><rect x="135" y="40" width="1" height="1" fill="#000000"/><rect x="121" y="42" width="1" height="1" fill="#000000"/><rect x="135" y="42" width="1" height="1" fill="#000000"/><rect x="121" y="44" width="1" height="1" fill="#000000"/><rect x="135" y="44" width="1" height="1" fill="#000000"/><rect x="121" y="46" width="1" height="1" fill="#000000"/><rect x="135" y="46" width="1" height="1" fill="#000000"/><rect x="121" y="48" width="1" height="1" fill="#000000"/><rect x="135" y="48" width="1" height="1" fill="#000000"/><rect x="121" y="50" width="1" height="1" fill="#000000"/><rect x="135" y="50" width="1" height="1" fill="#000000"/><rect x="121" y="52" width="1" height="1" fill="#000000"/><rect x="135" y="52" width="1" height="1" fill="#000000"/><rect x="122" y="53" width="1" height="1" fill="#000000"/><rect x="124" y="53" width="1" height="1" fill="#000000"/><rect x="126" y="53" width="1" height="1" fill="#000000"/><rect x="128" y="53" width="1" height="1" fill="#000000"/><rect x="130" y="53" width="1" height="1" fill="#000000"/><rect x="132" y="53" width="1" height="1" fill="#000000"/><rect x="134" y="53" width="1" height="1" fill="#000000"/><rect x="149" y="39" width="1" height="1" fill="#faf8ee"/><rect x="148" y="40" width="1" height="1" fill="#faf8ee"/><rect x="150" y="40" width="1" height="1" fill="#faf8ee"/><rect x="148" y="41" width="1" height="1" fill="#faf8ee"/><rect x="150" y="41" width="1" height="1" fill="#faf8ee"/><rect x="143" y="42" width="1" height="1" fill="#faf8ee"/><rect x="148" y="42" width="1" height="1" fill="#faf8ee"/><rect x="150" y="42" width="1" height="1" fill="#faf8ee"/><rect x="155" y="42" width="1" height="1" fill="#faf8ee"/><rect x="142" y="43" width="1" height="1" fill="#faf8ee"/><rect x="144" y="43" width="1" height="1" fill="#faf8ee"/><rect x="148" y="43" width="1" height="1" fill="#faf8ee"/><rect x="150" y="43" width="1" height="1" fill="#faf8ee"/><rect x="154" y="43" width="1" height="1" fill="#faf8ee"/><rect x="156" y="43" width="1" height="1" fill="#faf8ee"/><rect x="142" y="44" width="1" height="1" fill="#faf8ee"/><rect x="145" y="44" width="1" height="1" fill="#faf8ee"/><rect x="148" y="44" width="1" height="1" fill="#faf8ee"/><rect x="150" y="44" width="1" height="1" fill="#faf8ee"/><rect x="153" y="44" width="1" height="1" fill="#faf8ee"/><rect x="156" y="44" width="1" height="1" fill="#faf8ee"/><rect x="142" y="45" width="1" height="1" fill="#faf8ee"/><rect x="146" y="45" width="1" height="1" fill="#faf8ee"/><rect x="148" y="45" width="1" height="1" fill="#faf8ee"/><rect x="150" y="45" width="1" height="1" fill="#faf8ee"/><rect x="152" y="45" width="1" height="1" fill="#faf8ee"/><rect x="156" y="45" width="1" height="1" fill="#faf8ee"/><rect x="142" y="46" width="1" height="1" fill="#faf8ee"/><rect x="147" y="46" width="2" height="1" fill="#faf8ee"/><rect x="150" y="46" width="2" height="1" fill="#faf8ee"/><rect x="156" y="46" width="1" height="1" fill="#faf8ee"/><rect x="142" y="47" width="1" height="1" fill="#faf8ee"/><rect x="147" y="47" width="2" height="1" fill="#faf8ee"/><rect x="150" y="47" width="2" height="1" fill="#faf8ee"/><rect x="156" y="47" width="1" height="1" fill="#faf8ee"/><rect x="142" y="48" width="1" height="1" fill="#faf8ee"/><rect x="146" y="48" width="1" height="1" fill="#faf8ee"/><rect x="148" y="48" width="1" height="1" fill="#faf8ee"/><rect x="150" y="48" width="1" height="1" fill="#faf8ee"/><rect x="152" y="48" width="1" height="1" fill="#faf8ee"/><rect x="156" y="48" width="1" height="1" fill="#faf8ee"/><rect x="142" y="49" width="1" height="1" fill="#faf8ee"/><rect x="145" y="49" width="1" height="1" fill="#faf8ee"/><rect x="148" y="49" width="1" height="1" fill="#faf8ee"/><rect x="150" y="49" width="1" height="1" fill="#faf8ee"/><rect x="153" y="49" width="1" height="1" fill="#faf8ee"/><rect x="156" y="49" width="1" height="1" fill="#faf8ee"/><rect x="142" y="50" width="1" height="1" fill="#faf8ee"/><rect x="144" y="50" width="1" height="1" fill="#faf8ee"/><rect x="148" y="50" width="1" height="1" fill="#faf8ee"/><rect x="150" y="50" width="1" height="1" fill="#faf8ee"/><rect x="154" y="50" width="1" height="1" fill="#faf8ee"/><rect x="156" y="50" width="1" height="1" fill="#faf8ee"/><rect x="143" y="51" width="1" height="1" fill="#faf8ee"/><rect x="148" y="51" width="1" height="1" fill="#faf8ee"/><rect x="150" y="51" width="1" height="1" fill="#faf8ee"/><rect x="155" y="51" width="1" height="1" fill="#faf8ee"/><rect x="149" y="52" width="1" height="1" fill="#faf8ee"/><rect x="149" y="40" width="1" height="1" fill="#000000"/><rect x="149" y="41" width="1" height="1" fill="#000000"/><rect x="149" y="42" width="1" height="1" fill="#000000"/><rect x="143" y="43" width="1" height="1" fill="#000000"/><rect x="149" y="43" width="1" height="1" fill="#000000"/><rect x="155" y="43" width="1" height="1" fill="#000000"/><rect x="143" y="44" width="2" height="1" fill="#000000"/><rect x="149" y="44" width="1" height="1" fill="#000000"/><rect x="154" y="44" width="2" height="1" fill="#000000"/><rect x="143" y="45" width="3" height="1" fill="#000000"/><rect x="149" y="45" width="1" height="1" fill="#000000"/><rect x="153" y="45" width="3" height="1" fill="#000000"/><rect x="143" y="46" width="4" height="1" fill="#000000"/><rect x="149" y="46" width="1" height="1" fill="#000000"/><rect x="152" y="46" width="4" height="1" fill="#000000"/><rect x="143" y="47" width="4" height="1" fill="#000000"/><rect x="149" y="47" width="1" height="1" fill="#000000"/><rect x="152" y="47" width="4" height="1" fill="#000000"/><rect x="143" y="48" width="3" height="1" fill="#000000"/><rect x="149" y="48" width="1" height="1" fill="#000000"/><rect x="153" y="48" width="3" height="1" fill="#000000"/><rect x="143" y="49" width="2" height="1" fill="#000000"/><rect x="149" y="49" width="1" height="1" fill="#000000"/><rect x="154" y="49" width="2" height="1" fill="#000000"/><rect x="143" y="50" width="1" height="1" fill="#000000"/><rect x="149" y="50" width="1" height="1" fill="#000000"/><rect x="155" y="50" width="1" height="1" fill="#000000"/><rect x="149" y="51" width="1" height="1" fill="#000000"/><rect x="174" y="38" width="6" height="1" fill="#faf8ee"/><rect x="173" y="39" width="1" height="1" fill="#faf8ee"/><rect x="180" y="39" width="1" height="1" fill="#faf8ee"/><rect x="173" y="40" width="1" height="1" fill="#faf8ee"/><rect x="181" y="40" width="1" height="1" fill="#faf8ee"/><rect x="173" y="41" width="1" height="1" fill="#faf8ee"/><rect x="180" y="41" width="6" height="1" fill="#faf8ee"/><rect x="173" y="42" width="1" height="1" fill="#faf8ee"/><rect x="186" y="42" width="1" height="1" fill="#faf8ee"/><rect x="173" y="43" width="1" height="1" fill="#faf8ee"/><rect x="187" y="43" width="1" height="1" fill="#faf8ee"/><rect x="173" y="44" width="1" height="1" fill="#faf8ee"/><rect x="188" y="44" width="1" height="1" fill="#faf8ee"/><rect x="173" y="45" width="1" height="1" fill="#faf8ee"/><rect x="189" y="45" width="1" height="1" fill="#faf8ee"/><rect x="173" y="46" width="1" height="1" fill="#faf8ee"/><rect x="189" y="46" width="1" height="1" fill="#faf8ee"/><rect x="173" y="47" width="1" height="1" fill="#faf8ee"/><rect x="189" y="47" width="1" height="1" fill="#faf8ee"/><rect x="173" y="48" width="1" height="1" fill="#faf8ee"/><rect x="189" y="48" width="1" height="1" fill="#faf8ee"/><rect x="174" y="49" width="6" height="1" fill="#faf8ee"/><rect x="189" y="49" width="1" height="1" fill="#faf8ee"/><rect x="179" y="50" width="1" height="1" fill="#faf8ee"/><rect x="189" y="50" width="1" height="1" fill="#faf8ee"/><rect x="179" y="51" width="1" height="1" fill="#faf8ee"/><rect x="189" y="51" width="1" height="1" fill="#faf8ee"/><rect x="180" y="52" width="9" height="1" fill="#faf8ee"/><rect x="174" y="39" width="6" height="1" fill="#000000"/><rect x="174" y="40" width="1" height="1" fill="#000000"/><rect x="175" y="40" width="4" height="1" fill="#ffffff"/><rect x="179" y="40" width="2" height="1" fill="#000000"/><rect x="174" y="41" width="1" height="1" fill="#000000"/><rect x="175" y="41" width="4" height="1" fill="#ffffff"/><rect x="179" y="41" width="1" height="1" fill="#000000"/><rect x="174" y="42" width="1" height="1" fill="#000000"/><rect x="175" y="42" width="1" height="1" fill="#ffffff"/><rect x="176" y="42" width="2" height="1" fill="#000000"/><rect x="178" y="42" width="1" height="1" fill="#ffffff"/><rect x="179" y="42" width="1" height="1" fill="#000000"/><rect x="180" y="42" width="6" height="1" fill="#000080"/><rect x="174" y="43" width="1" height="1" fill="#000000"/><rect x="175" y="43" width="5" height="1" fill="#ffffff"/><rect x="180" y="43" width="1" height="1" fill="#000080"/><rect x="181" y="43" width="4" height="1" fill="#ffffff"/><rect x="185" y="43" width="2" height="1" fill="#000080"/><rect x="174" y="44" width="1" height="1" fill="#000000"/><rect x="175" y="44" width="1" height="1" fill="#ffffff"/><rect x="176" y="44" width="4" height="1" fill="#000000"/><rect x="180" y="44" width="1" height="1" fill="#000080"/><rect x="181" y="44" width="4" height="1" fill="#ffffff"/><rect x="185" y="44" width="1" height="1" fill="#000080"/><rect x="186" y="44" width="1" height="1" fill="#ffffff"/><rect x="187" y="44" width="1" height="1" fill="#000080"/><rect x="174" y="45" width="1" height="1" fill="#000000"/><rect x="175" y="45" width="5" height="1" fill="#ffffff"/><rect x="180" y="45" width="1" height="1" fill="#000080"/><rect x="181" y="45" width="1" height="1" fill="#ffffff"/><rect x="182" y="45" width="2" height="1" fill="#000000"/><rect x="184" y="45" width="1" height="1" fill="#ffffff"/><rect x="185" y="45" width="4" height="1" fill="#000080"/><rect x="174" y="46" width="1" height="1" fill="#000000"/><rect x="175" y="46" width="1" height="1" fill="#ffffff"/><rect x="176" y="46" width="4" height="1" fill="#000000"/><rect x="180" y="46" width="1" height="1" fill="#000080"/><rect x="181" y="46" width="7" height="1" fill="#ffffff"/><rect x="188" y="46" width="1" height="1" fill="#000080"/><rect x="174" y="47" width="1" height="1" fill="#000000"/><rect x="175" y="47" width="5" height="1" fill="#ffffff"/><rect x="180" y="47" width="1" height="1" fill="#000080"/><rect x="181" y="47" width="1" height="1" fill="#ffffff"/><rect x="182" y="47" width="5" height="1" fill="#000000"/><rect x="187" y="47" width="1" height="1" fill="#ffffff"/><rect x="188" y="47" width="1" height="1" fill="#000080"/><rect x="174" y="48" width="6" height="1" fill="#000000"/><rect x="180" y="48" width="1" height="1" fill="#000080"/><rect x="181" y="48" width="7" height="1" fill="#ffffff"/><rect x="188" y="48" width="1" height="1" fill="#000080"/><rect x="180" y="49" width="1" height="1" fill="#000080"/><rect x="181" y="49" width="1" height="1" fill="#ffffff"/><rect x="182" y="49" width="5" height="1" fill="#000000"/><rect x="187" y="49" width="1" height="1" fill="#ffffff"/><rect x="188" y="49" width="1" height="1" fill="#000080"/><rect x="180" y="50" width="1" height="1" fill="#000080"/><rect x="181" y="50" width="7" height="1" fill="#ffffff"/><rect x="188" y="50" width="1" height="1" fill="#000080"/><rect x="180" y="51" width="9" height="1" fill="#000080"/><rect x="197" y="38" width="14" height="1" fill="#faf8ee"/><rect x="196" y="39" width="1" height="1" fill="#faf8ee"/><rect x="211" y="39" width="1" height="1" fill="#faf8ee"/><rect x="196" y="40" width="1" height="1" fill="#faf8ee"/><rect x="211" y="40" width="1" height="1" fill="#faf8ee"/><rect x="196" y="41" width="1" height="1" fill="#faf8ee"/><rect x="211" y="41" width="1" height="1" fill="#faf8ee"/><rect x="196" y="42" width="1" height="1" fill="#faf8ee"/><rect x="211" y="42" width="1" height="1" fill="#faf8ee"/><rect x="196" y="43" width="1" height="1" fill="#faf8ee"/><rect x="211" y="43" width="1" height="1" fill="#faf8ee"/><rect x="196" y="44" width="1" height="1" fill="#faf8ee"/><rect x="211" y="44" width="1" height="1" fill="#faf8ee"/><rect x="196" y="45" width="1" height="1" fill="#faf8ee"/><rect x="211" y="45" width="1" height="1" fill="#faf8ee"/><rect x="196" y="46" width="1" height="1" fill="#faf8ee"/><rect x="211" y="46" width="1" height="1" fill="#faf8ee"/><rect x="196" y="47" width="1" height="1" fill="#faf8ee"/><rect x="211" y="47" width="1" height="1" fill="#faf8ee"/><rect x="196" y="48" width="1" height="1" fill="#faf8ee"/><rect x="211" y="48" width="1" height="1" fill="#faf8ee"/><rect x="196" y="49" width="1" height="1" fill="#faf8ee"/><rect x="211" y="49" width="1" height="1" fill="#faf8ee"/><rect x="196" y="50" width="1" height="1" fill="#faf8ee"/><rect x="211" y="50" width="1" height="1" fill="#faf8ee"/><rect x="196" y="51" width="1" height="1" fill="#faf8ee"/><rect x="211" y="51" width="1" height="1" fill="#faf8ee"/><rect x="197" y="52" width="1" height="1" fill="#faf8ee"/><rect x="211" y="52" width="1" height="1" fill="#faf8ee"/><rect x="198" y="53" width="13" height="1" fill="#faf8ee"/><rect x="197" y="39" width="14" height="1" fill="#000000"/><rect x="197" y="40" width="1" height="1" fill="#000000"/><rect x="198" y="40" width="1" height="1" fill="#8a8a50"/><rect x="199" y="40" width="1" height="1" fill="#000000"/><rect x="200" y="40" width="8" height="1" fill="#ffffff"/><rect x="208" y="40" width="1" height="1" fill="#000000"/><rect x="209" y="40" width="1" height="1" fill="#ffffff"/><rect x="210" y="40" width="1" height="1" fill="#000000"/><rect x="197" y="41" width="1" height="1" fill="#000000"/><rect x="198" y="41" width="1" height="1" fill="#8a8a50"/><rect x="199" y="41" width="1" height="1" fill="#000000"/><rect x="200" y="41" width="1" height="1" fill="#ffffff"/><rect x="201" y="41" width="6" height="1" fill="#e8e6de"/><rect x="207" y="41" width="1" height="1" fill="#ffffff"/><rect x="208" y="41" width="3" height="1" fill="#000000"/><rect x="197" y="42" width="1" height="1" fill="#000000"/><rect x="198" y="42" width="1" height="1" fill="#8a8a50"/><rect x="199" y="42" width="1" height="1" fill="#000000"/><rect x="200" y="42" width="1" height="1" fill="#ffffff"/><rect x="201" y="42" width="6" height="1" fill="#e8e6de"/><rect x="207" y="42" width="1" height="1" fill="#ffffff"/><rect x="208" y="42" width="1" height="1" fill="#000000"/><rect x="209" y="42" width="1" height="1" fill="#8a8a50"/><rect x="210" y="42" width="1" height="1" fill="#000000"/><rect x="197" y="43" width="1" height="1" fill="#000000"/><rect x="198" y="43" width="1" height="1" fill="#8a8a50"/><rect x="199" y="43" width="1" height="1" fill="#000000"/><rect x="200" y="43" width="1" height="1" fill="#ffffff"/><rect x="201" y="43" width="6" height="1" fill="#e8e6de"/><rect x="207" y="43" width="1" height="1" fill="#ffffff"/><rect x="208" y="43" width="1" height="1" fill="#000000"/><rect x="209" y="43" width="1" height="1" fill="#8a8a50"/><rect x="210" y="43" width="1" height="1" fill="#000000"/><rect x="197" y="44" width="1" height="1" fill="#000000"/><rect x="198" y="44" width="1" height="1" fill="#8a8a50"/><rect x="199" y="44" width="1" height="1" fill="#000000"/><rect x="200" y="44" width="1" height="1" fill="#ffffff"/><rect x="201" y="44" width="6" height="1" fill="#e8e6de"/><rect x="207" y="44" width="1" height="1" fill="#ffffff"/><rect x="208" y="44" width="1" height="1" fill="#000000"/><rect x="209" y="44" width="1" height="1" fill="#8a8a50"/><rect x="210" y="44" width="1" height="1" fill="#000000"/><rect x="197" y="45" width="1" height="1" fill="#000000"/><rect x="198" y="45" width="1" height="1" fill="#8a8a50"/><rect x="199" y="45" width="1" height="1" fill="#000000"/><rect x="200" y="45" width="8" height="1" fill="#ffffff"/><rect x="208" y="45" width="1" height="1" fill="#000000"/><rect x="209" y="45" width="1" height="1" fill="#8a8a50"/><rect x="210" y="45" width="1" height="1" fill="#000000"/><rect x="197" y="46" width="1" height="1" fill="#000000"/><rect x="198" y="46" width="2" height="1" fill="#8c8c30"/><rect x="200" y="46" width="8" height="1" fill="#000000"/><rect x="208" y="46" width="1" height="1" fill="#8c8c30"/><rect x="209" y="46" width="1" height="1" fill="#8a8a50"/><rect x="210" y="46" width="1" height="1" fill="#000000"/><rect x="197" y="47" width="1" height="1" fill="#000000"/><rect x="198" y="47" width="2" height="1" fill="#8c8c30"/><rect x="200" y="47" width="8" height="1" fill="#8a8a40"/><rect x="208" y="47" width="1" height="1" fill="#8c8c30"/><rect x="209" y="47" width="1" height="1" fill="#8a8a50"/><rect x="210" y="47" width="1" height="1" fill="#000000"/><rect x="197" y="48" width="1" height="1" fill="#000000"/><rect x="198" y="48" width="2" height="1" fill="#8c8c30"/><rect x="200" y="48" width="8" height="1" fill="#000000"/><rect x="208" y="48" width="1" height="1" fill="#8c8c30"/><rect x="209" y="48" width="1" height="1" fill="#8a8a50"/><rect x="210" y="48" width="1" height="1" fill="#000000"/><rect x="197" y="49" width="1" height="1" fill="#000000"/><rect x="198" y="49" width="2" height="1" fill="#8c8c30"/><rect x="200" y="49" width="6" height="1" fill="#000000"/><rect x="206" y="49" width="2" height="1" fill="#ffffff"/><rect x="208" y="49" width="1" height="1" fill="#000000"/><rect x="209" y="49" width="1" height="1" fill="#8a8a50"/><rect x="210" y="49" width="1" height="1" fill="#000000"/><rect x="197" y="50" width="1" height="1" fill="#000000"/><rect x="198" y="50" width="2" height="1" fill="#8c8c30"/><rect x="200" y="50" width="6" height="1" fill="#000000"/><rect x="206" y="50" width="2" height="1" fill="#ffffff"/><rect x="208" y="50" width="1" height="1" fill="#000000"/><rect x="209" y="50" width="1" height="1" fill="#8a8a50"/><rect x="210" y="50" width="1" height="1" fill="#000000"/><rect x="197" y="51" width="1" height="1" fill="#000000"/><rect x="198" y="51" width="2" height="1" fill="#8c8c30"/><rect x="200" y="51" width="6" height="1" fill="#000000"/><rect x="206" y="51" width="2" height="1" fill="#ffffff"/><rect x="208" y="51" width="1" height="1" fill="#000000"/><rect x="209" y="51" width="1" height="1" fill="#8a8a50"/><rect x="210" y="51" width="1" height="1" fill="#000000"/><rect x="198" y="52" width="13" height="1" fill="#000000"/><rect x="223" y="38" width="9" height="1" fill="#faf8ee"/><rect x="222" y="39" width="1" height="1" fill="#faf8ee"/><rect x="232" y="39" width="1" height="1" fill="#faf8ee"/><rect x="221" y="40" width="1" height="1" fill="#faf8ee"/><rect x="232" y="40" width="1" height="1" fill="#faf8ee"/><rect x="221" y="41" width="1" height="1" fill="#faf8ee"/><rect x="231" y="41" width="1" height="1" fill="#faf8ee"/><rect x="220" y="42" width="1" height="1" fill="#faf8ee"/><rect x="231" y="42" width="2" height="1" fill="#faf8ee"/><rect x="220" y="43" width="1" height="1" fill="#faf8ee"/><rect x="233" y="43" width="1" height="1" fill="#faf8ee"/><rect x="219" y="44" width="1" height="1" fill="#faf8ee"/><rect x="234" y="44" width="1" height="1" fill="#faf8ee"/><rect x="218" y="45" width="1" height="1" fill="#faf8ee"/><rect x="234" y="45" width="1" height="1" fill="#faf8ee"/><rect x="217" y="46" width="1" height="1" fill="#faf8ee"/><rect x="234" y="46" width="1" height="1" fill="#faf8ee"/><rect x="217" y="47" width="1" height="1" fill="#faf8ee"/><rect x="234" y="47" width="1" height="1" fill="#faf8ee"/><rect x="217" y="48" width="1" height="1" fill="#faf8ee"/><rect x="234" y="48" width="1" height="1" fill="#faf8ee"/><rect x="217" y="49" width="1" height="1" fill="#faf8ee"/><rect x="233" y="49" width="1" height="1" fill="#faf8ee"/><rect x="217" y="50" width="1" height="1" fill="#faf8ee"/><rect x="233" y="50" width="1" height="1" fill="#faf8ee"/><rect x="218" y="51" width="1" height="1" fill="#faf8ee"/><rect x="232" y="51" width="1" height="1" fill="#faf8ee"/><rect x="219" y="52" width="1" height="1" fill="#faf8ee"/><rect x="231" y="52" width="1" height="1" fill="#faf8ee"/><rect x="220" y="53" width="11" height="1" fill="#faf8ee"/><rect x="223" y="39" width="9" height="1" fill="#000000"/><rect x="222" y="40" width="1" height="1" fill="#000000"/><rect x="223" y="40" width="8" height="1" fill="#ffffff"/><rect x="231" y="40" width="1" height="1" fill="#000000"/><rect x="222" y="41" width="1" height="1" fill="#000000"/><rect x="223" y="41" width="1" height="1" fill="#ffffff"/><rect x="224" y="41" width="5" height="1" fill="#000000"/><rect x="229" y="41" width="1" height="1" fill="#ffffff"/><rect x="230" y="41" width="1" height="1" fill="#000000"/><rect x="221" y="42" width="1" height="1" fill="#000000"/><rect x="222" y="42" width="8" height="1" fill="#ffffff"/><rect x="230" y="42" width="1" height="1" fill="#000000"/><rect x="221" y="43" width="1" height="1" fill="#000000"/><rect x="222" y="43" width="1" height="1" fill="#ffffff"/><rect x="223" y="43" width="5" height="1" fill="#000000"/><rect x="228" y="43" width="1" height="1" fill="#ffffff"/><rect x="229" y="43" width="4" height="1" fill="#000000"/><rect x="220" y="44" width="1" height="1" fill="#000000"/><rect x="221" y="44" width="8" height="1" fill="#ffffff"/><rect x="229" y="44" width="1" height="1" fill="#000000"/><rect x="230" y="44" width="1" height="1" fill="#ffffff"/><rect x="231" y="44" width="1" height="1" fill="#000000"/><rect x="232" y="44" width="1" height="1" fill="#ffffff"/><rect x="233" y="44" width="1" height="1" fill="#000000"/><rect x="219" y="45" width="10" height="1" fill="#000000"/><rect x="229" y="45" width="1" height="1" fill="#ffffff"/><rect x="230" y="45" width="1" height="1" fill="#000000"/><rect x="231" y="45" width="1" height="1" fill="#ffffff"/><rect x="232" y="45" width="2" height="1" fill="#000000"/><rect x="218" y="46" width="1" height="1" fill="#000000"/><rect x="219" y="46" width="10" height="1" fill="#d0d0d0"/><rect x="229" y="46" width="1" height="1" fill="#000000"/><rect x="230" y="46" width="1" height="1" fill="#ffffff"/><rect x="231" y="46" width="1" height="1" fill="#000000"/><rect x="232" y="46" width="1" height="1" fill="#d0d0d0"/><rect x="233" y="46" width="1" height="1" fill="#000000"/><rect x="218" y="47" width="12" height="1" fill="#000000"/><rect x="230" y="47" width="3" height="1" fill="#d0d0d0"/><rect x="233" y="47" width="1" height="1" fill="#000000"/><rect x="218" y="48" width="1" height="1" fill="#000000"/><rect x="219" y="48" width="7" height="1" fill="#d0d0d0"/><rect x="226" y="48" width="4" height="1" fill="#c8e8c8"/><rect x="230" y="48" width="1" height="1" fill="#000000"/><rect x="231" y="48" width="2" height="1" fill="#d0d0d0"/><rect x="233" y="48" width="1" height="1" fill="#000000"/><rect x="218" y="49" width="1" height="1" fill="#000000"/><rect x="219" y="49" width="7" height="1" fill="#d0d0d0"/><rect x="226" y="49" width="4" height="1" fill="#c8e8c8"/><rect x="230" y="49" width="1" height="1" fill="#000000"/><rect x="231" y="49" width="1" height="1" fill="#d0d0d0"/><rect x="232" y="49" width="1" height="1" fill="#000000"/><rect x="218" y="50" width="13" height="1" fill="#000000"/><rect x="231" y="50" width="1" height="1" fill="#ffffff"/><rect x="232" y="50" width="1" height="1" fill="#000000"/><rect x="219" y="51" width="1" height="1" fill="#000000"/><rect x="220" y="51" width="10" height="1" fill="#d0d0d0"/><rect x="230" y="51" width="1" height="1" fill="#ffffff"/><rect x="231" y="51" width="1" height="1" fill="#000000"/><rect x="220" y="52" width="11" height="1" fill="#000000"/></svg>
<svg class="a" style="left:0;top:0" width="1284" height="1025" viewBox="0 0 1284 1025"><g shape-rendering="crispEdges"><line x1="169" y1="73.5" x2="992" y2="73.5" stroke="#8a8a8a" stroke-width="1" stroke-dasharray="3 3"/><line x1="169" y1="100.5" x2="992" y2="100.5" stroke="#8a8a8a" stroke-width="1" stroke-dasharray="3 3"/><line x1="169" y1="127.5" x2="992" y2="127.5" stroke="#8a8a8a" stroke-width="1" stroke-dasharray="3 3"/><line x1="169" y1="154.5" x2="992" y2="154.5" stroke="#8a8a8a" stroke-width="1" stroke-dasharray="3 3"/><line x1="169" y1="181.5" x2="992" y2="181.5" stroke="#8a8a8a" stroke-width="1" stroke-dasharray="3 3"/><line x1="169" y1="208.5" x2="992" y2="208.5" stroke="#8a8a8a" stroke-width="1" stroke-dasharray="3 3"/><line x1="169" y1="235.5" x2="992" y2="235.5" stroke="#8a8a8a" stroke-width="1" stroke-dasharray="3 3"/><line x1="169" y1="262.5" x2="992" y2="262.5" stroke="#8a8a8a" stroke-width="1" stroke-dasharray="3 3"/><line x1="169" y1="289.5" x2="992" y2="289.5" stroke="#8a8a8a" stroke-width="1" stroke-dasharray="3 3"/><line x1="169" y1="316.5" x2="992" y2="316.5" stroke="#8a8a8a" stroke-width="1" stroke-dasharray="3 3"/><line x1="169" y1="343.5" x2="992" y2="343.5" stroke="#8a8a8a" stroke-width="1" stroke-dasharray="3 3"/><line x1="169" y1="370.5" x2="992" y2="370.5" stroke="#8a8a8a" stroke-width="1" stroke-dasharray="3 3"/><line x1="169" y1="397.5" x2="992" y2="397.5" stroke="#8a8a8a" stroke-width="1" stroke-dasharray="3 3"/><line x1="169" y1="424.5" x2="992" y2="424.5" stroke="#8a8a8a" stroke-width="1" stroke-dasharray="3 3"/><line x1="169" y1="451.5" x2="992" y2="451.5" stroke="#8a8a8a" stroke-width="1" stroke-dasharray="3 3"/><line x1="169" y1="478.5" x2="992" y2="478.5" stroke="#8a8a8a" stroke-width="1" stroke-dasharray="3 3"/><line x1="169" y1="505.5" x2="992" y2="505.5" stroke="#8a8a8a" stroke-width="1" stroke-dasharray="3 3"/><line x1="169" y1="532.5" x2="992" y2="532.5" stroke="#8a8a8a" stroke-width="1" stroke-dasharray="3 3"/><line x1="169" y1="559.5" x2="992" y2="559.5" stroke="#8a8a8a" stroke-width="1" stroke-dasharray="3 3"/><line x1="169" y1="586.5" x2="992" y2="586.5" stroke="#8a8a8a" stroke-width="1" stroke-dasharray="3 3"/><line x1="169" y1="613.5" x2="992" y2="613.5" stroke="#8a8a8a" stroke-width="1" stroke-dasharray="3 3"/><line x1="169" y1="640.5" x2="992" y2="640.5" stroke="#8a8a8a" stroke-width="1" stroke-dasharray="3 3"/><line x1="169" y1="667.5" x2="992" y2="667.5" stroke="#8a8a8a" stroke-width="1" stroke-dasharray="3 3"/><line x1="169" y1="694.5" x2="992" y2="694.5" stroke="#8a8a8a" stroke-width="1" stroke-dasharray="3 3"/><line x1="169" y1="721.5" x2="992" y2="721.5" stroke="#8a8a8a" stroke-width="1" stroke-dasharray="3 3"/><line x1="169" y1="748.5" x2="992" y2="748.5" stroke="#8a8a8a" stroke-width="1" stroke-dasharray="3 3"/><line x1="169" y1="775.5" x2="992" y2="775.5" stroke="#8a8a8a" stroke-width="1" stroke-dasharray="3 3"/><line x1="169" y1="802.5" x2="992" y2="802.5" stroke="#8a8a8a" stroke-width="1" stroke-dasharray="3 3"/><line x1="169" y1="829.5" x2="992" y2="829.5" stroke="#8a8a8a" stroke-width="1" stroke-dasharray="3 3"/><line x1="169" y1="856.5" x2="992" y2="856.5" stroke="#8a8a8a" stroke-width="1" stroke-dasharray="3 3"/><line x1="169" y1="883.5" x2="992" y2="883.5" stroke="#8a8a8a" stroke-width="1" stroke-dasharray="3 3"/><line x1="169" y1="910.5" x2="992" y2="910.5" stroke="#8a8a8a" stroke-width="1" stroke-dasharray="3 3"/><line x1="169" y1="937.5" x2="992" y2="937.5" stroke="#8a8a8a" stroke-width="1" stroke-dasharray="3 3"/><line x1="219.5" y1="71" x2="219.5" y2="939" stroke="#8a8a8a" stroke-width="1" stroke-dasharray="3 3"/><line x1="269.5" y1="71" x2="269.5" y2="939" stroke="#8a8a8a" stroke-width="1" stroke-dasharray="3 3"/><line x1="320.5" y1="71" x2="320.5" y2="939" stroke="#8a8a8a" stroke-width="1" stroke-dasharray="3 3"/><line x1="370.5" y1="71" x2="370.5" y2="939" stroke="#8a8a8a" stroke-width="1" stroke-dasharray="3 3"/><line x1="420.5" y1="71" x2="420.5" y2="939" stroke="#8a8a8a" stroke-width="1" stroke-dasharray="3 3"/><line x1="470.5" y1="71" x2="470.5" y2="939" stroke="#8a8a8a" stroke-width="1" stroke-dasharray="3 3"/><line x1="521.5" y1="71" x2="521.5" y2="939" stroke="#8a8a8a" stroke-width="1" stroke-dasharray="3 3"/><line x1="571.5" y1="71" x2="571.5" y2="939" stroke="#8a8a8a" stroke-width="1" stroke-dasharray="3 3"/><line x1="621.5" y1="71" x2="621.5" y2="939" stroke="#8a8a8a" stroke-width="1" stroke-dasharray="3 3"/><line x1="671.5" y1="71" x2="671.5" y2="939" stroke="#8a8a8a" stroke-width="1" stroke-dasharray="3 3"/><line x1="722.5" y1="71" x2="722.5" y2="939" stroke="#8a8a8a" stroke-width="1" stroke-dasharray="3 3"/><line x1="772.5" y1="71" x2="772.5" y2="939" stroke="#8a8a8a" stroke-width="1" stroke-dasharray="3 3"/><line x1="822.5" y1="71" x2="822.5" y2="939" stroke="#8a8a8a" stroke-width="1" stroke-dasharray="3 3"/><line x1="872.5" y1="71" x2="872.5" y2="939" stroke="#8a8a8a" stroke-width="1" stroke-dasharray="3 3"/><line x1="923.5" y1="71" x2="923.5" y2="939" stroke="#8a8a8a" stroke-width="1" stroke-dasharray="3 3"/><line x1="973.5" y1="71" x2="973.5" y2="939" stroke="#8a8a8a" stroke-width="1" stroke-dasharray="3 3"/><rect x="169.5" y="71.5" width="823" height="868" fill="none" stroke="#8c8c8c" stroke-width="1"/><rect x="91" y="71" width="1" height="869" fill="#000"/><rect x="85" y="84" width="6" height="1" fill="#000"/><rect x="85" y="146" width="6" height="1" fill="#000"/><rect x="85" y="209" width="6" height="1" fill="#000"/><rect x="85" y="271" width="6" height="1" fill="#000"/><rect x="85" y="334" width="6" height="1" fill="#000"/><rect x="85" y="397" width="6" height="1" fill="#000"/><rect x="85" y="459" width="6" height="1" fill="#000"/><rect x="85" y="522" width="6" height="1" fill="#000"/><rect x="85" y="584" width="6" height="1" fill="#000"/><rect x="85" y="647" width="6" height="1" fill="#000"/><rect x="85" y="709" width="6" height="1" fill="#000"/><rect x="85" y="772" width="6" height="1" fill="#000"/><rect x="85" y="834" width="6" height="1" fill="#000"/><rect x="85" y="897" width="6" height="1" fill="#000"/><rect x="88" y="115" width="3" height="1" fill="#000"/><rect x="88" y="178" width="3" height="1" fill="#000"/><rect x="88" y="240" width="3" height="1" fill="#000"/><rect x="88" y="303" width="3" height="1" fill="#000"/><rect x="88" y="365" width="3" height="1" fill="#000"/><rect x="88" y="428" width="3" height="1" fill="#000"/><rect x="88" y="490" width="3" height="1" fill="#000"/><rect x="88" y="553" width="3" height="1" fill="#000"/><rect x="88" y="615" width="3" height="1" fill="#000"/><rect x="88" y="678" width="3" height="1" fill="#000"/><rect x="88" y="740" width="3" height="1" fill="#000"/><rect x="88" y="803" width="3" height="1" fill="#000"/><rect x="88" y="866" width="3" height="1" fill="#000"/><rect x="88" y="928" width="3" height="1" fill="#000"/><rect x="164" y="71" width="1" height="869" fill="#a42020"/><rect x="158" y="73" width="6" height="1" fill="#a42020"/><rect x="158" y="127" width="6" height="1" fill="#a42020"/><rect x="158" y="181" width="6" height="1" fill="#a42020"/><rect x="158" y="235" width="6" height="1" fill="#a42020"/><rect x="158" y="289" width="6" height="1" fill="#a42020"/><rect x="158" y="343" width="6" height="1" fill="#a42020"/><rect x="158" y="397" width="6" height="1" fill="#a42020"/><rect x="158" y="451" width="6" height="1" fill="#a42020"/><rect x="158" y="505" width="6" height="1" fill="#a42020"/><rect x="158" y="559" width="6" height="1" fill="#a42020"/><rect x="158" y="613" width="6" height="1" fill="#a42020"/><rect x="158" y="667" width="6" height="1" fill="#a42020"/><rect x="158" y="721" width="6" height="1" fill="#a42020"/><rect x="158" y="775" width="6" height="1" fill="#a42020"/><rect x="158" y="829" width="6" height="1" fill="#a42020"/><rect x="158" y="883" width="6" height="1" fill="#a42020"/><rect x="158" y="937" width="6" height="1" fill="#a42020"/><rect x="161" y="100" width="3" height="1" fill="#a42020"/><rect x="161" y="154" width="3" height="1" fill="#a42020"/><rect x="161" y="208" width="3" height="1" fill="#a42020"/><rect x="161" y="262" width="3" height="1" fill="#a42020"/><rect x="161" y="316" width="3" height="1" fill="#a42020"/><rect x="161" y="370" width="3" height="1" fill="#a42020"/><rect x="161" y="424" width="3" height="1" fill="#a42020"/><rect x="161" y="478" width="3" height="1" fill="#a42020"/><rect x="161" y="532" width="3" height="1" fill="#a42020"/><rect x="161" y="586" width="3" height="1" fill="#a42020"/><rect x="161" y="640" width="3" height="1" fill="#a42020"/><rect x="161" y="694" width="3" height="1" fill="#a42020"/><rect x="161" y="748" width="3" height="1" fill="#a42020"/><rect x="161" y="802" width="3" height="1" fill="#a42020"/><rect x="161" y="856" width="3" height="1" fill="#a42020"/><rect x="161" y="910" width="3" height="1" fill="#a42020"/><rect x="169" y="944" width="824" height="1" fill="#000"/><rect x="169" y="945" width="1" height="6" fill="#000"/><rect x="219" y="945" width="1" height="3" fill="#000"/><rect x="269" y="945" width="1" height="6" fill="#000"/><rect x="320" y="945" width="1" height="3" fill="#000"/><rect x="370" y="945" width="1" height="6" fill="#000"/><rect x="420" y="945" width="1" height="3" fill="#000"/><rect x="470" y="945" width="1" height="6" fill="#000"/><rect x="521" y="945" width="1" height="3" fill="#000"/><rect x="571" y="945" width="1" height="6" fill="#000"/><rect x="621" y="945" width="1" height="3" fill="#000"/><rect x="671" y="945" width="1" height="6" fill="#000"/><rect x="722" y="945" width="1" height="3" fill="#000"/><rect x="772" y="945" width="1" height="6" fill="#000"/><rect x="822" y="945" width="1" height="3" fill="#000"/><rect x="872" y="945" width="1" height="6" fill="#000"/><rect x="923" y="945" width="1" height="3" fill="#000"/><rect x="973" y="945" width="1" height="6" fill="#000"/></g><rect x="998" y="89" width="13" height="4" fill="#e80000"/><rect x="998" y="105" width="13" height="4" fill="#000"/><defs><clipPath id="pc"><rect x="169" y="70" width="824" height="870"/></clipPath></defs><g clip-path="url(#pc)" fill="none" stroke-width="2" stroke-linejoin="round" stroke-linecap="butt" shape-rendering="crispEdges"><polyline points="169.7,210.0 173.2,229.3 175.5,245.0 176.6,270.0 177.4,410.0 177.9,410.0 177.9,75.5 179.0,76.7 179.6,93.0 180.8,108.3 182.0,123.5 182.3,185.0 182.6,258.5 185.5,282.0 189.2,304.5 190.2,300.0 190.2,183.9 191.3,71.4 193.1,80.2 194.9,86.0 196.0,94.3 196.6,104.8 197.8,115.4 198.4,185.0 199.2,245.0 200.1,258.5 204.8,317.0 214.2,425.0 221.2,505.8 230.0,605.0 242.3,790.0 242.9,860.0 243.3,876.6 244.5,891.5 245.8,904.0 246.6,916.4 248.2,926.3 250.3,936.3 251.1,938.5 252.5,938.5 254.0,928.8 255.3,918.0 257.0,899.8 258.1,888.0 259.8,840.5 260.7,786.0 273.0,605.0 280.9,505.8 288.0,425.0 300.6,274.3 301.8,262.6 303.5,249.7 303.8,185.0 304.4,124.7 305.5,111.8 306.7,100.0 307.3,92.0 308.5,83.7 309.6,77.9 312.0,71.4 312.6,169.2 313.2,185.0 312.9,305.3 315.2,298.9 317.0,286.0 318.1,276.7 319.3,266.0 320.5,254.4 320.8,118.9 322.5,102.5 323.1,87.2 324.0,75.5 324.3,410.0 325.2,269.6 326.9,256.7 327.5,243.9 328.7,233.3 329.3,225.1 330.4,214.6 334.0,209.9 334.0,343.0 992.0,343.0" stroke="#000"/><polyline points="169.8,505.5 170.2,494.0 170.5,465.6 171.1,438.6 172.3,411.7 172.9,400.0 174.5,350.0 176.1,320.0 176.7,272.6 178.5,266.0 182.0,262.0 182.6,276.0 184.3,317.0 184.5,336.0 186.0,394.0 187.5,423.4 188.1,453.9 189.3,482.0 189.9,505.4 191.0,493.7 191.0,465.6 192.2,435.1 193.4,404.7 196.6,311.7 197.2,276.0 199.0,239.8 212.6,203.5 220.3,185.0 226.7,164.5 232.6,140.0 237.2,111.8 240.2,90.8 242.9,71.4 243.7,94.3 244.3,140.0 245.2,185.0 246.7,240.6 247.5,346.9 250.2,425.0 251.0,516.0 252.8,605.0 256.3,788.0 258.2,860.0 258.6,888.0 259.4,926.0 259.9,939.0 261.5,918.0 264.0,903.0 266.5,891.5 269.0,878.0 273.1,860.0 280.9,828.2 288.0,809.0 303.7,768.3 305.5,719.0 309.0,593.0 309.9,563.2 310.5,534.5 312.0,505.8 313.4,536.9 314.0,567.3 315.2,597.8 316.0,605.0 318.7,684.0 321.0,747.5 325.0,740.0 326.6,728.0 328.3,671.7 330.0,613.8 330.4,588.4 331.6,560.3 332.8,534.5 333.4,507.6 335.1,505.0 992.0,505.0" stroke="#c40000"/></g></svg>
<div class="t" style="right:1203px;top:78.5px;text-align:right">5000,000</div>
<div class="t" style="right:1203px;top:140.5px;text-align:right">4800,000</div>
<div class="t" style="right:1203px;top:203.5px;text-align:right">4600,000</div>
<div class="t" style="right:1203px;top:265.5px;text-align:right">4400,000</div>
<div class="t" style="right:1203px;top:328.5px;text-align:right">4200,000</div>
<div class="t" style="right:1203px;top:391.5px;text-align:right">4000,000</div>
<div class="t" style="right:1203px;top:453.5px;text-align:right">3800,000</div>
<div class="t" style="right:1203px;top:516.5px;text-align:right">3600,000</div>
<div class="t" style="right:1203px;top:578.5px;text-align:right">3400,000</div>
<div class="t" style="right:1203px;top:641.5px;text-align:right">3200,000</div>
<div class="t" style="right:1203px;top:703.5px;text-align:right">3000,000</div>
<div class="t" style="right:1203px;top:766.5px;text-align:right">2800,000</div>
<div class="t" style="right:1203px;top:828.5px;text-align:right">2600,000</div>
<div class="t" style="right:1203px;top:891.5px;text-align:right">2400,000</div>
<div class="t" style="right:1129.5px;top:67.5px;text-align:right;color:#a81c1c">8,000</div>
<div class="t" style="right:1129.5px;top:121.5px;text-align:right;color:#a81c1c">7,000</div>
<div class="t" style="right:1129.5px;top:175.5px;text-align:right;color:#a81c1c">6,000</div>
<div class="t" style="right:1129.5px;top:229.5px;text-align:right;color:#a81c1c">5,000</div>
<div class="t" style="right:1129.5px;top:283.5px;text-align:right;color:#a81c1c">4,000</div>
<div class="t" style="right:1129.5px;top:337.5px;text-align:right;color:#a81c1c">3,000</div>
<div class="t" style="right:1129.5px;top:391.5px;text-align:right;color:#a81c1c">2,000</div>
<div class="t" style="right:1129.5px;top:445.5px;text-align:right;color:#a81c1c">1,000</div>
<div class="t" style="right:1129.5px;top:499.5px;text-align:right;color:#a81c1c">0,000</div>
<div class="t" style="right:1129.5px;top:553.5px;text-align:right;color:#a81c1c">-1,000</div>
<div class="t" style="right:1129.5px;top:607.5px;text-align:right;color:#a81c1c">-2,000</div>
<div class="t" style="right:1129.5px;top:661.5px;text-align:right;color:#a81c1c">-3,000</div>
<div class="t" style="right:1129.5px;top:715.5px;text-align:right;color:#a81c1c">-4,000</div>
<div class="t" style="right:1129.5px;top:769.5px;text-align:right;color:#a81c1c">-5,000</div>
<div class="t" style="right:1129.5px;top:823.5px;text-align:right;color:#a81c1c">-6,000</div>
<div class="t" style="right:1129.5px;top:877.5px;text-align:right;color:#a81c1c">-7,000</div>
<div class="t" style="right:1129.5px;top:931.5px;text-align:right;color:#a81c1c">-8,000</div>
<div class="t" style="left:129.4px;width:80px;top:954.5px;text-align:center">0,000</div>
<div class="t" style="left:229.9px;width:80px;top:954.5px;text-align:center">2,000</div>
<div class="t" style="left:330.4px;width:80px;top:954.5px;text-align:center">4,000</div>
<div class="t" style="left:430.9px;width:80px;top:954.5px;text-align:center">6,000</div>
<div class="t" style="left:531.4px;width:80px;top:954.5px;text-align:center">8,000</div>
<div class="t" style="left:631.9px;width:80px;top:954.5px;text-align:center">10,000</div>
<div class="t" style="left:732.4px;width:80px;top:954.5px;text-align:center">12,000</div>
<div class="t" style="left:832.9px;width:80px;top:954.5px;text-align:center">14,000</div>
<div class="t" style="left:933.4px;width:80px;top:954.5px;text-align:center">16,000</div>
<div class="a" style="left:-17px;top:497px;width:80px;height:16px;line-height:16px;text-align:center;font-family:'Liberation Sans', sans-serif;font-weight:bold;font-size:13px;transform:rotate(-90deg);white-space:nowrap;will-change:transform">Nm</div>
<div class="a" style="left:69px;top:496px;width:80px;height:16px;line-height:16px;text-align:center;font-family:'Liberation Sans', sans-serif;font-weight:bold;font-size:14px;color:#cc0000;transform:rotate(-90deg);white-space:nowrap;will-change:transform">U/min</div>
<div class="a" style="left:560px;width:40px;top:973px;text-align:center;font-family:'Liberation Sans', sans-serif;font-weight:bold;font-size:14px;line-height:14px;will-change:transform">s</div>
<div class="t" style="left:1017px;top:84.7px">Messuhr 2: Drehzahl über Zeit</div>
<div class="t" style="left:1017px;top:100.7px">Messuhr 2: Drehmoment über Zeit (mit Schockfaktor)</div>
</body></html>
